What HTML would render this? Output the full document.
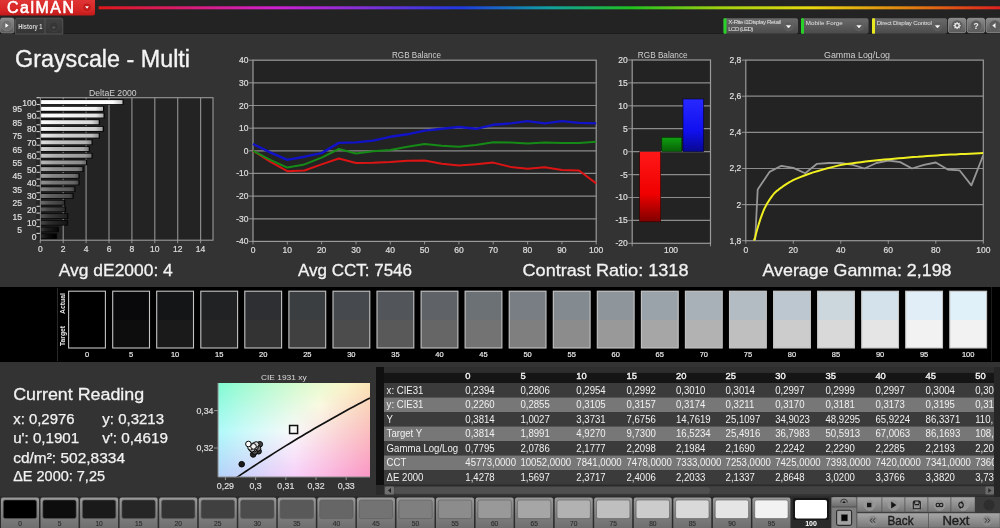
<!DOCTYPE html>
<html><head><meta charset="utf-8"><title>CalMAN Grayscale - Multi</title>
<style>
html,body{margin:0;padding:0;background:#333;width:1000px;height:528px;overflow:hidden;}
svg{display:block;font-family:"Liberation Sans", sans-serif;will-change:transform;}
</style></head><body>
<svg width="1000" height="528" viewBox="0 0 1000 528">
<defs>
<linearGradient id="rainbow" x1="0" x2="1" y1="0" y2="0">
 <stop offset="0" stop-color="#e01818"/>
 <stop offset="0.195" stop-color="#d020d0"/>
 <stop offset="0.297" stop-color="#8030d8"/>
 <stop offset="0.40" stop-color="#2038e0"/>
 <stop offset="0.50" stop-color="#10a0a0"/>
 <stop offset="0.59" stop-color="#20c020"/>
 <stop offset="0.69" stop-color="#a0d010"/>
 <stop offset="0.79" stop-color="#e8d810"/>
 <stop offset="0.90" stop-color="#e08010"/>
 <stop offset="1" stop-color="#e02020"/>
</linearGradient>
<linearGradient id="redbtn" x1="0" x2="0" y1="0" y2="1">
 <stop offset="0" stop-color="#e03434"/>
 <stop offset="0.6" stop-color="#d82626"/>
 <stop offset="1" stop-color="#c21a1a"/>
</linearGradient>
<linearGradient id="graybtn" x1="0" x2="0" y1="0" y2="1">
 <stop offset="0" stop-color="#8c8c8c"/>
 <stop offset="1" stop-color="#5a5a5a"/>
</linearGradient>
<linearGradient id="ddbtn" x1="0" x2="0" y1="0" y2="1">
 <stop offset="0" stop-color="#6a6a6a"/>
 <stop offset="1" stop-color="#4a4a4a"/>
</linearGradient>
<linearGradient id="swbtn" x1="0" x2="0" y1="0" y2="1">
 <stop offset="0" stop-color="#9a9a9a"/>
 <stop offset="1" stop-color="#6e6e6e"/>
</linearGradient>
<linearGradient id="ctlbtn" x1="0" x2="0" y1="0" y2="1">
 <stop offset="0" stop-color="#a8a8a8"/>
 <stop offset="1" stop-color="#767676"/>
</linearGradient>
<linearGradient id="hdr" x1="0" x2="0" y1="0" y2="1">
 <stop offset="0" stop-color="#2e2e2e"/>
 <stop offset="0.34" stop-color="#2e2e2e"/>
 <stop offset="0.37" stop-color="#161616"/>
 <stop offset="1" stop-color="#141414"/>
</linearGradient>
<linearGradient id="barR" x1="0" x2="1" y1="0" y2="0">
 <stop offset="0" stop-color="#b00000"/><stop offset="0.3" stop-color="#ff1010"/><stop offset="1" stop-color="#d00000"/>
</linearGradient>
<linearGradient id="barRv" x1="0" x2="0" y1="0" y2="1">
 <stop offset="0" stop-color="#ff1818"/><stop offset="0.6" stop-color="#f00000"/><stop offset="1" stop-color="#800000"/>
</linearGradient>
<linearGradient id="barGv" x1="0" x2="0" y1="0" y2="1">
 <stop offset="0" stop-color="#10a010"/><stop offset="1" stop-color="#086008"/>
</linearGradient>
<linearGradient id="barBv" x1="0" x2="0" y1="0" y2="1">
 <stop offset="0" stop-color="#2828ff"/><stop offset="0.6" stop-color="#1010f0"/><stop offset="1" stop-color="#080890"/>
</linearGradient>
<linearGradient id="cieH" x1="0" x2="1" y1="0" y2="0">
 <stop offset="0" stop-color="#a0f8d8"/>
 <stop offset="0.5" stop-color="#f4fff0"/>
 <stop offset="1" stop-color="#ffd8b0"/>
</linearGradient>
<linearGradient id="cieV" x1="0" x2="0" y1="0" y2="1">
 <stop offset="0" stop-color="#80ff80" stop-opacity="0.25"/>
 <stop offset="0.5" stop-color="#ffffff" stop-opacity="0.0"/>
 <stop offset="1" stop-color="#c080ff" stop-opacity="0.45"/>
</linearGradient>
</defs>

<rect x="0" y="0" width="1000" height="34" fill="#232323"/>
<rect x="0" y="33" width="1000" height="1" fill="#1c1c1c"/>
<rect x="0" y="34" width="1000" height="253" fill="#333333"/>
<rect x="0" y="287" width="1000" height="75" fill="#000000"/>
<rect x="0" y="362" width="1000" height="135" fill="#333333"/>
<rect x="0" y="496" width="1000" height="32" fill="#2c2c2c"/>
<path d="M0 0 H95 V13 Q95 15.5 92.5 15.5 H0 Z" fill="url(#redbtn)"/>
<text x="7.0" y="13.3" font-size="15.9" fill="#fff" text-anchor="start" font-weight="normal" textLength="67" lengthAdjust="spacing" stroke="#fff" stroke-width="0.6">CalMAN</text>
<circle cx="87" cy="7.5" r="4.5" fill="#c41a1a" stroke="#e04040" stroke-width="0.6"/>
<path d="M85 6.3 L89 6.3 L87 8.8 Z" fill="#fff"/>
<rect x="98.6" y="6.3" width="901.4" height="3" fill="url(#rainbow)"/>
<rect x="0.5" y="18" width="13.5" height="15" rx="2" fill="url(#graybtn)" stroke="#999" stroke-width="0.6"/>
<circle cx="6.8" cy="25.5" r="5.2" fill="#6e6e6e" stroke="#8a8a8a" stroke-width="0.6"/>
<path d="M5.4 23.3 L8.6 25.5 L5.4 27.7 Z" fill="#fff"/>
<linearGradient id="tabg" x1="0" x2="0" y1="0" y2="1"><stop offset="0" stop-color="#424242"/><stop offset="1" stop-color="#343434"/></linearGradient>
<path d="M15.4 34 V20 Q15.4 18.2 17.4 18.2 H60.8 Q62.8 18.2 62.8 20 V34 Z" fill="url(#tabg)" stroke="#5a5a5a" stroke-width="0.8"/>
<line x1="45" y1="18.5" x2="45" y2="34" stroke="#5a5a5a" stroke-width="0.8"/>
<text x="18.2" y="29.4" font-size="7.4" fill="#d4d4d4" text-anchor="start" font-weight="bold" textLength="24.3" lengthAdjust="spacingAndGlyphs" >History 1</text>
<circle cx="53.8" cy="26.8" r="4.8" fill="#363636" stroke="#484848" stroke-width="0.6"/>
<path d="M52.2 27.6 H55.4 M53.8 26 V29.2" stroke="#5e5e5e" stroke-width="0.8"/>
<rect x="723.5" y="18.2" width="74.5" height="15.6" rx="1.8" fill="url(#ddbtn)"/>
<rect x="723.5" y="18.2" width="3" height="15.6" rx="0.8" fill="#28d028"/>
<text x="728.3" y="24.4" font-size="6.2" fill="#e4e4e4" text-anchor="start" font-weight="normal" textLength="52.5" lengthAdjust="spacing" >X-Rite i1Display Retail</text>
<text x="728.3" y="30.799999999999997" font-size="6.2" fill="#e4e4e4" text-anchor="start" font-weight="normal" textLength="25" lengthAdjust="spacing" >LCD (LED)</text>
<circle cx="788.5" cy="26.3" r="4.4" fill="#5a5a5a" stroke="#6a6a6a" stroke-width="0.5"/>
<path d="M786.2 25.4 L790.8 25.4 L788.5 28 Z" fill="#fff" stroke="#fff" stroke-width="0.4" stroke-linejoin="round"/>
<rect x="801" y="18.2" width="67.5" height="15.6" rx="1.8" fill="url(#ddbtn)"/>
<rect x="801" y="18.2" width="3" height="15.6" rx="0.8" fill="#28d028"/>
<text x="805.8" y="24.6" font-size="6.2" fill="#e4e4e4" text-anchor="start" font-weight="normal" textLength="37" lengthAdjust="spacing" >Mobile Forge</text>
<circle cx="859.0" cy="26.3" r="4.4" fill="#5a5a5a" stroke="#6a6a6a" stroke-width="0.5"/>
<path d="M856.7 25.4 L861.3 25.4 L859.0 28 Z" fill="#fff" stroke="#fff" stroke-width="0.4" stroke-linejoin="round"/>
<rect x="872" y="18.2" width="75" height="15.6" rx="1.8" fill="url(#ddbtn)"/>
<rect x="872" y="18.2" width="3" height="15.6" rx="0.8" fill="#e8e820"/>
<text x="876.8" y="24.6" font-size="6.2" fill="#e4e4e4" text-anchor="start" font-weight="normal" textLength="55" lengthAdjust="spacing" >Direct Display Control</text>
<circle cx="937.5" cy="26.3" r="4.4" fill="#5a5a5a" stroke="#6a6a6a" stroke-width="0.5"/>
<path d="M935.2 25.4 L939.8 25.4 L937.5 28 Z" fill="#fff" stroke="#fff" stroke-width="0.4" stroke-linejoin="round"/>
<rect x="948.4" y="18.3" width="17.4" height="14.4" rx="2" fill="url(#graybtn)" stroke="#a0a0a0" stroke-width="0.7"/>
<circle cx="957.1" cy="25.6" r="5.4" fill="#5e5e5e"/>
<rect x="967.3" y="18.3" width="17.4" height="14.4" rx="2" fill="url(#graybtn)" stroke="#a0a0a0" stroke-width="0.7"/>
<circle cx="976.0" cy="25.6" r="5.4" fill="#5e5e5e"/>
<rect x="986.2" y="18.3" width="17.4" height="14.4" rx="2" fill="url(#graybtn)" stroke="#a0a0a0" stroke-width="0.7"/>
<circle cx="994.9" cy="25.6" r="5.4" fill="#5e5e5e"/>
<polygon points="960.78,25.24 960.78,25.96 959.68,26.38 959.48,26.87 959.96,27.95 959.45,28.46 958.37,27.98 957.88,28.18 957.46,29.28 956.74,29.28 956.32,28.18 955.83,27.98 954.75,28.46 954.24,27.95 954.72,26.87 954.52,26.38 953.42,25.96 953.42,25.24 954.52,24.82 954.72,24.33 954.24,23.25 954.75,22.74 955.83,23.22 956.32,23.02 956.74,21.92 957.46,21.92 957.88,23.02 958.37,23.22 959.45,22.74 959.96,23.25 959.48,24.33 959.68,24.82" fill="#e4e4e4"/>
<circle cx="957.1" cy="25.6" r="1.3" fill="#5e5e5e"/>
<text x="976" y="28.8" font-size="8.5" fill="#f0f0f0" text-anchor="middle" font-weight="bold" >?</text>
<path d="M995.5 23 L992.3 25.6 L995.5 28.2 Z" fill="#f4f4f4"/>
<text x="15" y="67" font-size="23.5" fill="#f4f4f4" text-anchor="start" font-weight="normal" textLength="175" lengthAdjust="spacingAndGlyphs" stroke="#f4f4f4" stroke-width="0.35">Grayscale - Multi</text>
<text x="112.8" y="95.6" font-size="8.8" fill="#d0d0d0" text-anchor="middle" font-weight="normal" textLength="47.6" lengthAdjust="spacingAndGlyphs" >DeltaE 2000</text>
<rect x="40.3" y="97.7" width="172.7" height="142.5" fill="#232323"/>
<line x1="63.2" y1="97.7" x2="63.2" y2="240.2" stroke="#8a8a8a" stroke-width="1.2"/>
<line x1="86.1" y1="97.7" x2="86.1" y2="240.2" stroke="#8a8a8a" stroke-width="1.2"/>
<line x1="109.0" y1="97.7" x2="109.0" y2="240.2" stroke="#8a8a8a" stroke-width="1.2"/>
<line x1="131.9" y1="97.7" x2="131.9" y2="240.2" stroke="#8a8a8a" stroke-width="1.2"/>
<line x1="154.8" y1="97.7" x2="154.8" y2="240.2" stroke="#8a8a8a" stroke-width="1.2"/>
<line x1="177.7" y1="97.7" x2="177.7" y2="240.2" stroke="#8a8a8a" stroke-width="1.2"/>
<line x1="200.6" y1="97.7" x2="200.6" y2="240.2" stroke="#8a8a8a" stroke-width="1.2"/>
<rect x="40.3" y="97.7" width="172.7" height="142.5" fill="none" stroke="#9a9a9a" stroke-width="1.1"/>
<rect x="36" y="98.2" width="3.8" height="142.0" fill="#262626"/>
<linearGradient id="db100" x1="0" x2="1" y1="0" y2="0"><stop offset="0" stop-color="rgb(255,255,255)"/><stop offset="0.3" stop-color="rgb(255,255,255)"/><stop offset="0.88" stop-color="rgb(255,255,255)"/><stop offset="1" stop-color="rgb(191,191,191)"/></linearGradient>
<rect x="40.9" y="99.30" width="82.8" height="5.6" fill="#060606"/>
<rect x="41.1" y="100.10" width="81.4" height="4.0" fill="url(#db100)"/>
<line x1="36.5" y1="97.7" x2="39.8" y2="97.7" stroke="#d4d4d4" stroke-width="1.1"/>
<text x="36.5" y="105.6" font-size="8.5" fill="#dedede" text-anchor="end" font-weight="normal" stroke="#dedede" stroke-width="0.22">100</text>
<linearGradient id="db95" x1="0" x2="1" y1="0" y2="0"><stop offset="0" stop-color="rgb(255,255,255)"/><stop offset="0.3" stop-color="rgb(255,255,255)"/><stop offset="0.88" stop-color="rgb(242,242,242)"/><stop offset="1" stop-color="rgb(181,181,181)"/></linearGradient>
<rect x="40.9" y="106.00" width="63.3" height="5.6" fill="#060606"/>
<rect x="41.1" y="106.80" width="61.9" height="4.0" fill="url(#db95)"/>
<line x1="36.5" y1="104.5" x2="39.8" y2="104.5" stroke="#d4d4d4" stroke-width="1.1"/>
<text x="22" y="112.30499999999999" font-size="8.5" fill="#dedede" text-anchor="end" font-weight="normal" stroke="#dedede" stroke-width="0.22">95</text>
<linearGradient id="db90" x1="0" x2="1" y1="0" y2="0"><stop offset="0" stop-color="rgb(255,255,255)"/><stop offset="0.3" stop-color="rgb(249,249,249)"/><stop offset="0.88" stop-color="rgb(229,229,229)"/><stop offset="1" stop-color="rgb(171,171,171)"/></linearGradient>
<rect x="40.9" y="112.71" width="63.8" height="5.6" fill="#060606"/>
<rect x="41.1" y="113.51" width="62.4" height="4.0" fill="url(#db90)"/>
<line x1="36.5" y1="111.3" x2="39.8" y2="111.3" stroke="#d4d4d4" stroke-width="1.1"/>
<text x="36.5" y="119.00999999999999" font-size="8.5" fill="#dedede" text-anchor="end" font-weight="normal" stroke="#dedede" stroke-width="0.22">90</text>
<linearGradient id="db85" x1="0" x2="1" y1="0" y2="0"><stop offset="0" stop-color="rgb(255,255,255)"/><stop offset="0.3" stop-color="rgb(237,237,237)"/><stop offset="0.88" stop-color="rgb(217,217,217)"/><stop offset="1" stop-color="rgb(162,162,162)"/></linearGradient>
<rect x="40.9" y="119.42" width="59.0" height="5.6" fill="#060606"/>
<rect x="41.1" y="120.22" width="57.6" height="4.0" fill="url(#db85)"/>
<line x1="36.5" y1="118.1" x2="39.8" y2="118.1" stroke="#d4d4d4" stroke-width="1.1"/>
<text x="22" y="125.715" font-size="8.5" fill="#dedede" text-anchor="end" font-weight="normal" stroke="#dedede" stroke-width="0.22">85</text>
<linearGradient id="db80" x1="0" x2="1" y1="0" y2="0"><stop offset="0" stop-color="rgb(249,249,249)"/><stop offset="0.3" stop-color="rgb(224,224,224)"/><stop offset="0.88" stop-color="rgb(204,204,204)"/><stop offset="1" stop-color="rgb(153,153,153)"/></linearGradient>
<rect x="40.9" y="126.12" width="63.0" height="5.6" fill="#060606"/>
<rect x="41.1" y="126.92" width="61.6" height="4.0" fill="url(#db80)"/>
<line x1="36.5" y1="124.8" x2="39.8" y2="124.8" stroke="#d4d4d4" stroke-width="1.1"/>
<text x="36.5" y="132.42" font-size="8.5" fill="#dedede" text-anchor="end" font-weight="normal" stroke="#dedede" stroke-width="0.22">80</text>
<linearGradient id="db75" x1="0" x2="1" y1="0" y2="0"><stop offset="0" stop-color="rgb(236,236,236)"/><stop offset="0.3" stop-color="rgb(211,211,211)"/><stop offset="0.88" stop-color="rgb(191,191,191)"/><stop offset="1" stop-color="rgb(143,143,143)"/></linearGradient>
<rect x="40.9" y="132.82" width="59.0" height="5.6" fill="#060606"/>
<rect x="41.1" y="133.62" width="57.6" height="4.0" fill="url(#db75)"/>
<line x1="36.5" y1="131.6" x2="39.8" y2="131.6" stroke="#d4d4d4" stroke-width="1.1"/>
<text x="22" y="139.125" font-size="8.5" fill="#dedede" text-anchor="end" font-weight="normal" stroke="#dedede" stroke-width="0.22">75</text>
<linearGradient id="db70" x1="0" x2="1" y1="0" y2="0"><stop offset="0" stop-color="rgb(223,223,223)"/><stop offset="0.3" stop-color="rgb(198,198,198)"/><stop offset="0.88" stop-color="rgb(178,178,178)"/><stop offset="1" stop-color="rgb(133,133,133)"/></linearGradient>
<rect x="40.9" y="139.53" width="51.8" height="5.6" fill="#060606"/>
<rect x="41.1" y="140.33" width="50.4" height="4.0" fill="url(#db70)"/>
<line x1="36.5" y1="138.4" x2="39.8" y2="138.4" stroke="#d4d4d4" stroke-width="1.1"/>
<text x="36.5" y="145.82999999999998" font-size="8.5" fill="#dedede" text-anchor="end" font-weight="normal" stroke="#dedede" stroke-width="0.22">70</text>
<linearGradient id="db65" x1="0" x2="1" y1="0" y2="0"><stop offset="0" stop-color="rgb(211,211,211)"/><stop offset="0.3" stop-color="rgb(186,186,186)"/><stop offset="0.88" stop-color="rgb(166,166,166)"/><stop offset="1" stop-color="rgb(124,124,124)"/></linearGradient>
<rect x="40.9" y="146.23" width="49.0" height="5.6" fill="#060606"/>
<rect x="41.1" y="147.03" width="47.6" height="4.0" fill="url(#db65)"/>
<line x1="36.5" y1="145.2" x2="39.8" y2="145.2" stroke="#d4d4d4" stroke-width="1.1"/>
<text x="22" y="152.535" font-size="8.5" fill="#dedede" text-anchor="end" font-weight="normal" stroke="#dedede" stroke-width="0.22">65</text>
<linearGradient id="db60" x1="0" x2="1" y1="0" y2="0"><stop offset="0" stop-color="rgb(198,198,198)"/><stop offset="0.3" stop-color="rgb(173,173,173)"/><stop offset="0.88" stop-color="rgb(153,153,153)"/><stop offset="1" stop-color="rgb(114,114,114)"/></linearGradient>
<rect x="40.9" y="152.94" width="51.8" height="5.6" fill="#060606"/>
<rect x="41.1" y="153.74" width="50.4" height="4.0" fill="url(#db60)"/>
<line x1="36.5" y1="152.0" x2="39.8" y2="152.0" stroke="#d4d4d4" stroke-width="1.1"/>
<text x="36.5" y="159.24" font-size="8.5" fill="#dedede" text-anchor="end" font-weight="normal" stroke="#dedede" stroke-width="0.22">60</text>
<linearGradient id="db55" x1="0" x2="1" y1="0" y2="0"><stop offset="0" stop-color="rgb(185,185,185)"/><stop offset="0.3" stop-color="rgb(160,160,160)"/><stop offset="0.88" stop-color="rgb(140,140,140)"/><stop offset="1" stop-color="rgb(105,105,105)"/></linearGradient>
<rect x="40.9" y="159.64" width="46.3" height="5.6" fill="#060606"/>
<rect x="41.1" y="160.44" width="44.9" height="4.0" fill="url(#db55)"/>
<line x1="36.5" y1="158.8" x2="39.8" y2="158.8" stroke="#d4d4d4" stroke-width="1.1"/>
<text x="22" y="165.945" font-size="8.5" fill="#dedede" text-anchor="end" font-weight="normal" stroke="#dedede" stroke-width="0.22">55</text>
<linearGradient id="db50" x1="0" x2="1" y1="0" y2="0"><stop offset="0" stop-color="rgb(172,172,172)"/><stop offset="0.3" stop-color="rgb(147,147,147)"/><stop offset="0.88" stop-color="rgb(127,127,127)"/><stop offset="1" stop-color="rgb(95,95,95)"/></linearGradient>
<rect x="40.9" y="166.35" width="42.7" height="5.6" fill="#060606"/>
<rect x="41.1" y="167.15" width="41.3" height="4.0" fill="url(#db50)"/>
<line x1="36.5" y1="165.6" x2="39.8" y2="165.6" stroke="#d4d4d4" stroke-width="1.1"/>
<text x="36.5" y="172.64999999999998" font-size="8.5" fill="#dedede" text-anchor="end" font-weight="normal" stroke="#dedede" stroke-width="0.22">50</text>
<linearGradient id="db45" x1="0" x2="1" y1="0" y2="0"><stop offset="0" stop-color="rgb(160,160,160)"/><stop offset="0.3" stop-color="rgb(135,135,135)"/><stop offset="0.88" stop-color="rgb(115,115,115)"/><stop offset="1" stop-color="rgb(86,86,86)"/></linearGradient>
<rect x="40.9" y="173.05" width="38.7" height="5.6" fill="#060606"/>
<rect x="41.1" y="173.85" width="37.3" height="4.0" fill="url(#db45)"/>
<line x1="36.5" y1="172.3" x2="39.8" y2="172.3" stroke="#d4d4d4" stroke-width="1.1"/>
<text x="22" y="179.355" font-size="8.5" fill="#dedede" text-anchor="end" font-weight="normal" stroke="#dedede" stroke-width="0.22">45</text>
<linearGradient id="db40" x1="0" x2="1" y1="0" y2="0"><stop offset="0" stop-color="rgb(147,147,147)"/><stop offset="0.3" stop-color="rgb(122,122,122)"/><stop offset="0.88" stop-color="rgb(102,102,102)"/><stop offset="1" stop-color="rgb(76,76,76)"/></linearGradient>
<rect x="40.9" y="179.76" width="38.7" height="5.6" fill="#060606"/>
<rect x="41.1" y="180.56" width="37.3" height="4.0" fill="url(#db40)"/>
<line x1="36.5" y1="179.1" x2="39.8" y2="179.1" stroke="#d4d4d4" stroke-width="1.1"/>
<text x="36.5" y="186.06" font-size="8.5" fill="#dedede" text-anchor="end" font-weight="normal" stroke="#dedede" stroke-width="0.22">40</text>
<linearGradient id="db35" x1="0" x2="1" y1="0" y2="0"><stop offset="0" stop-color="rgb(134,134,134)"/><stop offset="0.3" stop-color="rgb(109,109,109)"/><stop offset="0.88" stop-color="rgb(89,89,89)"/><stop offset="1" stop-color="rgb(66,66,66)"/></linearGradient>
<rect x="40.9" y="186.46" width="34.6" height="5.6" fill="#060606"/>
<rect x="41.1" y="187.26" width="33.2" height="4.0" fill="url(#db35)"/>
<line x1="36.5" y1="185.9" x2="39.8" y2="185.9" stroke="#d4d4d4" stroke-width="1.1"/>
<text x="22" y="192.765" font-size="8.5" fill="#dedede" text-anchor="end" font-weight="normal" stroke="#dedede" stroke-width="0.22">35</text>
<linearGradient id="db30" x1="0" x2="1" y1="0" y2="0"><stop offset="0" stop-color="rgb(121,121,121)"/><stop offset="0.3" stop-color="rgb(96,96,96)"/><stop offset="0.88" stop-color="rgb(76,76,76)"/><stop offset="1" stop-color="rgb(57,57,57)"/></linearGradient>
<rect x="40.9" y="193.17" width="32.8" height="5.6" fill="#060606"/>
<rect x="41.1" y="193.97" width="31.4" height="4.0" fill="url(#db30)"/>
<line x1="36.5" y1="192.7" x2="39.8" y2="192.7" stroke="#d4d4d4" stroke-width="1.1"/>
<text x="36.5" y="199.47" font-size="8.5" fill="#dedede" text-anchor="end" font-weight="normal" stroke="#dedede" stroke-width="0.22">30</text>
<linearGradient id="db25" x1="0" x2="1" y1="0" y2="0"><stop offset="0" stop-color="rgb(109,109,109)"/><stop offset="0.3" stop-color="rgb(84,84,84)"/><stop offset="0.88" stop-color="rgb(64,64,64)"/><stop offset="1" stop-color="rgb(48,48,48)"/></linearGradient>
<rect x="40.9" y="199.88" width="24.4" height="5.6" fill="#060606"/>
<rect x="41.1" y="200.68" width="23.0" height="4.0" fill="url(#db25)"/>
<line x1="36.5" y1="199.5" x2="39.8" y2="199.5" stroke="#d4d4d4" stroke-width="1.1"/>
<text x="22" y="206.175" font-size="8.5" fill="#dedede" text-anchor="end" font-weight="normal" stroke="#dedede" stroke-width="0.22">25</text>
<linearGradient id="db20" x1="0" x2="1" y1="0" y2="0"><stop offset="0" stop-color="rgb(96,96,96)"/><stop offset="0.3" stop-color="rgb(71,71,71)"/><stop offset="0.88" stop-color="rgb(51,51,51)"/><stop offset="1" stop-color="rgb(38,38,38)"/></linearGradient>
<rect x="40.9" y="206.58" width="25.2" height="5.6" fill="#060606"/>
<rect x="41.1" y="207.38" width="23.8" height="4.0" fill="url(#db20)"/>
<line x1="36.5" y1="206.3" x2="39.8" y2="206.3" stroke="#d4d4d4" stroke-width="1.1"/>
<text x="36.5" y="212.88" font-size="8.5" fill="#dedede" text-anchor="end" font-weight="normal" stroke="#dedede" stroke-width="0.22">20</text>
<linearGradient id="db15" x1="0" x2="1" y1="0" y2="0"><stop offset="0" stop-color="rgb(83,83,83)"/><stop offset="0.3" stop-color="rgb(58,58,58)"/><stop offset="0.88" stop-color="rgb(38,38,38)"/><stop offset="1" stop-color="rgb(28,28,28)"/></linearGradient>
<rect x="40.9" y="213.28" width="27.5" height="5.6" fill="#060606"/>
<rect x="41.1" y="214.08" width="26.1" height="4.0" fill="url(#db15)"/>
<line x1="36.5" y1="213.1" x2="39.8" y2="213.1" stroke="#d4d4d4" stroke-width="1.1"/>
<text x="22" y="219.58499999999998" font-size="8.5" fill="#dedede" text-anchor="end" font-weight="normal" stroke="#dedede" stroke-width="0.22">15</text>
<linearGradient id="db10" x1="0" x2="1" y1="0" y2="0"><stop offset="0" stop-color="rgb(71,71,71)"/><stop offset="0.3" stop-color="rgb(46,46,46)"/><stop offset="0.88" stop-color="rgb(26,26,26)"/><stop offset="1" stop-color="rgb(19,19,19)"/></linearGradient>
<rect x="40.9" y="219.99" width="27.2" height="5.6" fill="#060606"/>
<rect x="41.1" y="220.79" width="25.8" height="4.0" fill="url(#db10)"/>
<line x1="36.5" y1="219.8" x2="39.8" y2="219.8" stroke="#d4d4d4" stroke-width="1.1"/>
<text x="36.5" y="226.29" font-size="8.5" fill="#dedede" text-anchor="end" font-weight="normal" stroke="#dedede" stroke-width="0.22">10</text>
<linearGradient id="db5" x1="0" x2="1" y1="0" y2="0"><stop offset="0" stop-color="rgb(58,58,58)"/><stop offset="0.3" stop-color="rgb(33,33,33)"/><stop offset="0.88" stop-color="rgb(13,13,13)"/><stop offset="1" stop-color="rgb(9,9,9)"/></linearGradient>
<rect x="40.9" y="226.69" width="18.0" height="5.6" fill="#060606"/>
<rect x="41.1" y="227.50" width="16.6" height="4.0" fill="url(#db5)"/>
<line x1="36.5" y1="226.6" x2="39.8" y2="226.6" stroke="#d4d4d4" stroke-width="1.1"/>
<text x="22" y="232.995" font-size="8.5" fill="#dedede" text-anchor="end" font-weight="normal" stroke="#dedede" stroke-width="0.22">5</text>
<linearGradient id="db0" x1="0" x2="1" y1="0" y2="0"><stop offset="0" stop-color="rgb(45,45,45)"/><stop offset="0.3" stop-color="rgb(20,20,20)"/><stop offset="0.88" stop-color="rgb(0,0,0)"/><stop offset="1" stop-color="rgb(0,0,0)"/></linearGradient>
<rect x="40.9" y="233.40" width="16.3" height="5.6" fill="#060606"/>
<rect x="41.1" y="234.20" width="14.9" height="4.0" fill="url(#db0)"/>
<line x1="36.5" y1="233.4" x2="39.8" y2="233.4" stroke="#d4d4d4" stroke-width="1.1"/>
<text x="36.5" y="239.7" font-size="8.5" fill="#dedede" text-anchor="end" font-weight="normal" stroke="#dedede" stroke-width="0.22">0</text>
<line x1="40.3" y1="240.2" x2="40.3" y2="243.2" stroke="#aaa" stroke-width="0.8"/>
<text x="40.3" y="252" font-size="8.5" fill="#dedede" text-anchor="middle" font-weight="normal" stroke="#dedede" stroke-width="0.22">0</text>
<line x1="63.2" y1="240.2" x2="63.2" y2="243.2" stroke="#aaa" stroke-width="0.8"/>
<text x="63.199999999999996" y="252" font-size="8.5" fill="#dedede" text-anchor="middle" font-weight="normal" stroke="#dedede" stroke-width="0.22">2</text>
<line x1="86.1" y1="240.2" x2="86.1" y2="243.2" stroke="#aaa" stroke-width="0.8"/>
<text x="86.1" y="252" font-size="8.5" fill="#dedede" text-anchor="middle" font-weight="normal" stroke="#dedede" stroke-width="0.22">4</text>
<line x1="109.0" y1="240.2" x2="109.0" y2="243.2" stroke="#aaa" stroke-width="0.8"/>
<text x="108.99999999999999" y="252" font-size="8.5" fill="#dedede" text-anchor="middle" font-weight="normal" stroke="#dedede" stroke-width="0.22">6</text>
<line x1="131.9" y1="240.2" x2="131.9" y2="243.2" stroke="#aaa" stroke-width="0.8"/>
<text x="131.89999999999998" y="252" font-size="8.5" fill="#dedede" text-anchor="middle" font-weight="normal" stroke="#dedede" stroke-width="0.22">8</text>
<line x1="154.8" y1="240.2" x2="154.8" y2="243.2" stroke="#aaa" stroke-width="0.8"/>
<text x="154.8" y="252" font-size="8.5" fill="#dedede" text-anchor="middle" font-weight="normal" stroke="#dedede" stroke-width="0.22">10</text>
<line x1="177.7" y1="240.2" x2="177.7" y2="243.2" stroke="#aaa" stroke-width="0.8"/>
<text x="177.7" y="252" font-size="8.5" fill="#dedede" text-anchor="middle" font-weight="normal" stroke="#dedede" stroke-width="0.22">12</text>
<line x1="200.6" y1="240.2" x2="200.6" y2="243.2" stroke="#aaa" stroke-width="0.8"/>
<text x="200.59999999999997" y="252" font-size="8.5" fill="#dedede" text-anchor="middle" font-weight="normal" stroke="#dedede" stroke-width="0.22">14</text>
<text x="416.5" y="57.6" font-size="8.7" fill="#d0d0d0" text-anchor="middle" font-weight="normal" textLength="49" lengthAdjust="spacingAndGlyphs" >RGB Balance</text>
<rect x="253" y="60.2" width="343.20000000000005" height="181.2" fill="#232323"/>
<line x1="253" y1="82.8" x2="596.2" y2="82.8" stroke="#8c8c8c" stroke-width="1.2"/>
<line x1="253" y1="105.5" x2="596.2" y2="105.5" stroke="#8c8c8c" stroke-width="1.2"/>
<line x1="253" y1="128.2" x2="596.2" y2="128.2" stroke="#8c8c8c" stroke-width="1.2"/>
<line x1="253" y1="150.8" x2="596.2" y2="150.8" stroke="#8c8c8c" stroke-width="1.2"/>
<line x1="253" y1="173.4" x2="596.2" y2="173.4" stroke="#8c8c8c" stroke-width="1.2"/>
<line x1="253" y1="196.1" x2="596.2" y2="196.1" stroke="#8c8c8c" stroke-width="1.2"/>
<line x1="253" y1="218.8" x2="596.2" y2="218.8" stroke="#8c8c8c" stroke-width="1.2"/>
<rect x="253" y="60.2" width="343.20000000000005" height="181.2" fill="none" stroke="#9a9a9a" stroke-width="1.2"/>
<line x1="249" y1="60.2" x2="253" y2="60.2" stroke="#aaa" stroke-width="0.8"/>
<text x="248.5" y="63.2" font-size="8.5" fill="#dedede" text-anchor="end" font-weight="normal" stroke="#dedede" stroke-width="0.22">40</text>
<line x1="249" y1="82.8" x2="253" y2="82.8" stroke="#aaa" stroke-width="0.8"/>
<text x="248.5" y="85.85" font-size="8.5" fill="#dedede" text-anchor="end" font-weight="normal" stroke="#dedede" stroke-width="0.22">30</text>
<line x1="249" y1="105.5" x2="253" y2="105.5" stroke="#aaa" stroke-width="0.8"/>
<text x="248.5" y="108.5" font-size="8.5" fill="#dedede" text-anchor="end" font-weight="normal" stroke="#dedede" stroke-width="0.22">20</text>
<line x1="249" y1="128.2" x2="253" y2="128.2" stroke="#aaa" stroke-width="0.8"/>
<text x="248.5" y="131.15" font-size="8.5" fill="#dedede" text-anchor="end" font-weight="normal" stroke="#dedede" stroke-width="0.22">10</text>
<line x1="249" y1="150.8" x2="253" y2="150.8" stroke="#aaa" stroke-width="0.8"/>
<text x="248.5" y="153.8" font-size="8.5" fill="#dedede" text-anchor="end" font-weight="normal" stroke="#dedede" stroke-width="0.22">0</text>
<line x1="249" y1="173.4" x2="253" y2="173.4" stroke="#aaa" stroke-width="0.8"/>
<text x="248.5" y="176.45" font-size="8.5" fill="#dedede" text-anchor="end" font-weight="normal" stroke="#dedede" stroke-width="0.22">-10</text>
<line x1="249" y1="196.1" x2="253" y2="196.1" stroke="#aaa" stroke-width="0.8"/>
<text x="248.5" y="199.10000000000002" font-size="8.5" fill="#dedede" text-anchor="end" font-weight="normal" stroke="#dedede" stroke-width="0.22">-20</text>
<line x1="249" y1="218.8" x2="253" y2="218.8" stroke="#aaa" stroke-width="0.8"/>
<text x="248.5" y="221.75" font-size="8.5" fill="#dedede" text-anchor="end" font-weight="normal" stroke="#dedede" stroke-width="0.22">-30</text>
<line x1="249" y1="241.4" x2="253" y2="241.4" stroke="#aaa" stroke-width="0.8"/>
<text x="248.5" y="244.39999999999998" font-size="8.5" fill="#dedede" text-anchor="end" font-weight="normal" stroke="#dedede" stroke-width="0.22">-40</text>
<line x1="253.0" y1="241.4" x2="253.0" y2="244.4" stroke="#aaa" stroke-width="0.8"/>
<text x="253.0" y="253" font-size="8.5" fill="#dedede" text-anchor="middle" font-weight="normal" stroke="#dedede" stroke-width="0.22">0</text>
<line x1="287.3" y1="241.4" x2="287.3" y2="244.4" stroke="#aaa" stroke-width="0.8"/>
<text x="287.32" y="253" font-size="8.5" fill="#dedede" text-anchor="middle" font-weight="normal" stroke="#dedede" stroke-width="0.22">10</text>
<line x1="321.6" y1="241.4" x2="321.6" y2="244.4" stroke="#aaa" stroke-width="0.8"/>
<text x="321.64" y="253" font-size="8.5" fill="#dedede" text-anchor="middle" font-weight="normal" stroke="#dedede" stroke-width="0.22">20</text>
<line x1="356.0" y1="241.4" x2="356.0" y2="244.4" stroke="#aaa" stroke-width="0.8"/>
<text x="355.96000000000004" y="253" font-size="8.5" fill="#dedede" text-anchor="middle" font-weight="normal" stroke="#dedede" stroke-width="0.22">30</text>
<line x1="390.3" y1="241.4" x2="390.3" y2="244.4" stroke="#aaa" stroke-width="0.8"/>
<text x="390.28000000000003" y="253" font-size="8.5" fill="#dedede" text-anchor="middle" font-weight="normal" stroke="#dedede" stroke-width="0.22">40</text>
<line x1="424.6" y1="241.4" x2="424.6" y2="244.4" stroke="#aaa" stroke-width="0.8"/>
<text x="424.6" y="253" font-size="8.5" fill="#dedede" text-anchor="middle" font-weight="normal" stroke="#dedede" stroke-width="0.22">50</text>
<line x1="458.9" y1="241.4" x2="458.9" y2="244.4" stroke="#aaa" stroke-width="0.8"/>
<text x="458.9200000000001" y="253" font-size="8.5" fill="#dedede" text-anchor="middle" font-weight="normal" stroke="#dedede" stroke-width="0.22">60</text>
<line x1="493.2" y1="241.4" x2="493.2" y2="244.4" stroke="#aaa" stroke-width="0.8"/>
<text x="493.24" y="253" font-size="8.5" fill="#dedede" text-anchor="middle" font-weight="normal" stroke="#dedede" stroke-width="0.22">70</text>
<line x1="527.6" y1="241.4" x2="527.6" y2="244.4" stroke="#aaa" stroke-width="0.8"/>
<text x="527.5600000000001" y="253" font-size="8.5" fill="#dedede" text-anchor="middle" font-weight="normal" stroke="#dedede" stroke-width="0.22">80</text>
<line x1="561.9" y1="241.4" x2="561.9" y2="244.4" stroke="#aaa" stroke-width="0.8"/>
<text x="561.8800000000001" y="253" font-size="8.5" fill="#dedede" text-anchor="middle" font-weight="normal" stroke="#dedede" stroke-width="0.22">90</text>
<line x1="596.2" y1="241.4" x2="596.2" y2="244.4" stroke="#aaa" stroke-width="0.8"/>
<text x="596.2" y="253" font-size="8.5" fill="#dedede" text-anchor="middle" font-weight="normal" stroke="#dedede" stroke-width="0.22">100</text>
<polyline points="253.0,150.8 270.2,161.7 287.3,171.2 304.5,170.5 321.6,164.4 338.8,158.5 356.0,163.0 373.1,162.8 390.3,162.1 407.4,160.8 424.6,160.5 441.8,163.7 458.9,165.5 476.1,164.2 493.2,162.6 510.4,166.9 527.6,168.7 544.7,167.3 561.9,170.1 579.0,170.5 596.2,183.4" fill="none" stroke="#dc1414" stroke-width="2.0" stroke-linejoin="round"/>
<polyline points="253.0,150.8 270.2,159.9 287.3,167.6 304.5,164.4 321.6,157.6 338.8,149.0 356.0,153.5 373.1,151.3 390.3,150.0 407.4,146.8 424.6,144.0 441.8,145.8 458.9,146.7 476.1,144.9 493.2,142.2 510.4,142.6 527.6,143.6 544.7,142.6 561.9,143.1 579.0,142.9 596.2,141.7" fill="none" stroke="#168a16" stroke-width="2.0" stroke-linejoin="round"/>
<polyline points="253.0,144.0 270.2,152.4 287.3,159.9 304.5,156.7 321.6,153.1 338.8,142.9 356.0,142.4 373.1,140.6 390.3,136.8 407.4,134.3 424.6,130.6 441.8,128.8 458.9,127.0 476.1,128.8 493.2,124.8 510.4,123.4 527.6,121.1 544.7,123.4 561.9,121.1 579.0,122.9 596.2,123.4" fill="none" stroke="#1212c8" stroke-width="2.4" stroke-linejoin="round"/>
<text x="662.7" y="57.6" font-size="8.7" fill="#d0d0d0" text-anchor="middle" font-weight="normal" textLength="49.7" lengthAdjust="spacingAndGlyphs" >RGB Balance</text>
<rect x="632.2" y="60" width="78.29999999999995" height="183.3" fill="#232323"/>
<line x1="632.2" y1="82.9" x2="710.5" y2="82.9" stroke="#8c8c8c" stroke-width="1.2"/>
<line x1="632.2" y1="105.8" x2="710.5" y2="105.8" stroke="#8c8c8c" stroke-width="1.2"/>
<line x1="632.2" y1="128.7" x2="710.5" y2="128.7" stroke="#8c8c8c" stroke-width="1.2"/>
<line x1="632.2" y1="151.7" x2="710.5" y2="151.7" stroke="#8c8c8c" stroke-width="1.2"/>
<line x1="632.2" y1="174.6" x2="710.5" y2="174.6" stroke="#8c8c8c" stroke-width="1.2"/>
<line x1="632.2" y1="197.5" x2="710.5" y2="197.5" stroke="#8c8c8c" stroke-width="1.2"/>
<line x1="632.2" y1="220.4" x2="710.5" y2="220.4" stroke="#8c8c8c" stroke-width="1.2"/>
<rect x="632.2" y="60" width="78.29999999999995" height="183.3" fill="none" stroke="#9a9a9a" stroke-width="1.2"/>
<line x1="628.2" y1="60.0" x2="632.2" y2="60.0" stroke="#aaa" stroke-width="0.8"/>
<text x="627.7" y="63.0" font-size="8.5" fill="#dedede" text-anchor="end" font-weight="normal" stroke="#dedede" stroke-width="0.22">20</text>
<line x1="628.2" y1="82.9" x2="632.2" y2="82.9" stroke="#aaa" stroke-width="0.8"/>
<text x="627.7" y="85.9125" font-size="8.5" fill="#dedede" text-anchor="end" font-weight="normal" stroke="#dedede" stroke-width="0.22">15</text>
<line x1="628.2" y1="105.8" x2="632.2" y2="105.8" stroke="#aaa" stroke-width="0.8"/>
<text x="627.7" y="108.825" font-size="8.5" fill="#dedede" text-anchor="end" font-weight="normal" stroke="#dedede" stroke-width="0.22">10</text>
<line x1="628.2" y1="128.7" x2="632.2" y2="128.7" stroke="#aaa" stroke-width="0.8"/>
<text x="627.7" y="131.7375" font-size="8.5" fill="#dedede" text-anchor="end" font-weight="normal" stroke="#dedede" stroke-width="0.22">5</text>
<line x1="628.2" y1="151.7" x2="632.2" y2="151.7" stroke="#aaa" stroke-width="0.8"/>
<text x="627.7" y="154.65" font-size="8.5" fill="#dedede" text-anchor="end" font-weight="normal" stroke="#dedede" stroke-width="0.22">0</text>
<line x1="628.2" y1="174.6" x2="632.2" y2="174.6" stroke="#aaa" stroke-width="0.8"/>
<text x="627.7" y="177.5625" font-size="8.5" fill="#dedede" text-anchor="end" font-weight="normal" stroke="#dedede" stroke-width="0.22">-5</text>
<line x1="628.2" y1="197.5" x2="632.2" y2="197.5" stroke="#aaa" stroke-width="0.8"/>
<text x="627.7" y="200.475" font-size="8.5" fill="#dedede" text-anchor="end" font-weight="normal" stroke="#dedede" stroke-width="0.22">-10</text>
<line x1="628.2" y1="220.4" x2="632.2" y2="220.4" stroke="#aaa" stroke-width="0.8"/>
<text x="627.7" y="223.3875" font-size="8.5" fill="#dedede" text-anchor="end" font-weight="normal" stroke="#dedede" stroke-width="0.22">-15</text>
<line x1="628.2" y1="243.3" x2="632.2" y2="243.3" stroke="#aaa" stroke-width="0.8"/>
<text x="627.7" y="246.3" font-size="8.5" fill="#dedede" text-anchor="end" font-weight="normal" stroke="#dedede" stroke-width="0.22">-20</text>
<line x1="632.2" y1="243.3" x2="632.2" y2="246.3" stroke="#aaa" stroke-width="0.8"/>
<line x1="710.5" y1="243.3" x2="710.5" y2="246.3" stroke="#aaa" stroke-width="0.8"/>
<text x="671" y="253" font-size="8.5" fill="#dedede" text-anchor="middle" font-weight="normal" stroke="#dedede" stroke-width="0.22">100</text>
<rect x="639.7" y="151.7" width="21" height="70.1" fill="url(#barRv)" stroke="#300" stroke-width="0.6"/>
<rect x="661.8" y="137.4" width="20" height="14.2" fill="url(#barGv)" stroke="#030" stroke-width="0.6"/>
<rect x="683" y="99.0" width="20.5" height="52.7" fill="url(#barBv)" stroke="#003" stroke-width="0.6"/>
<text x="857" y="57.6" font-size="8.7" fill="#d0d0d0" text-anchor="middle" font-weight="normal" textLength="66" lengthAdjust="spacingAndGlyphs" >Gamma Log/Log</text>
<rect x="745.8" y="60.1" width="237.5" height="180.6" fill="#232323"/>
<line x1="745.8" y1="96.2" x2="983.3" y2="96.2" stroke="#8c8c8c" stroke-width="1.2"/>
<line x1="745.8" y1="132.3" x2="983.3" y2="132.3" stroke="#8c8c8c" stroke-width="1.2"/>
<line x1="745.8" y1="168.5" x2="983.3" y2="168.5" stroke="#8c8c8c" stroke-width="1.2"/>
<line x1="745.8" y1="204.6" x2="983.3" y2="204.6" stroke="#8c8c8c" stroke-width="1.2"/>
<rect x="745.8" y="60.1" width="237.5" height="180.6" fill="none" stroke="#9a9a9a" stroke-width="1.2"/>
<line x1="741.8" y1="60.1" x2="745.8" y2="60.1" stroke="#aaa" stroke-width="0.8"/>
<text x="741.3" y="63.1" font-size="8.5" fill="#dedede" text-anchor="end" font-weight="normal" stroke="#dedede" stroke-width="0.22">2,8</text>
<line x1="741.8" y1="96.2" x2="745.8" y2="96.2" stroke="#aaa" stroke-width="0.8"/>
<text x="741.3" y="99.21999999999994" font-size="8.5" fill="#dedede" text-anchor="end" font-weight="normal" stroke="#dedede" stroke-width="0.22">2,6</text>
<line x1="741.8" y1="132.3" x2="745.8" y2="132.3" stroke="#aaa" stroke-width="0.8"/>
<text x="741.3" y="135.33999999999997" font-size="8.5" fill="#dedede" text-anchor="end" font-weight="normal" stroke="#dedede" stroke-width="0.22">2,4</text>
<line x1="741.8" y1="168.5" x2="745.8" y2="168.5" stroke="#aaa" stroke-width="0.8"/>
<text x="741.3" y="171.45999999999992" font-size="8.5" fill="#dedede" text-anchor="end" font-weight="normal" stroke="#dedede" stroke-width="0.22">2,2</text>
<line x1="741.8" y1="204.6" x2="745.8" y2="204.6" stroke="#aaa" stroke-width="0.8"/>
<text x="741.3" y="207.57999999999996" font-size="8.5" fill="#dedede" text-anchor="end" font-weight="normal" stroke="#dedede" stroke-width="0.22">2</text>
<line x1="741.8" y1="240.7" x2="745.8" y2="240.7" stroke="#aaa" stroke-width="0.8"/>
<text x="741.3" y="243.69999999999996" font-size="8.5" fill="#dedede" text-anchor="end" font-weight="normal" stroke="#dedede" stroke-width="0.22">1,8</text>
<line x1="745.8" y1="240.7" x2="745.8" y2="243.7" stroke="#aaa" stroke-width="0.8"/>
<text x="745.8" y="253" font-size="8.5" fill="#dedede" text-anchor="middle" font-weight="normal" stroke="#dedede" stroke-width="0.22">0</text>
<line x1="793.3" y1="240.7" x2="793.3" y2="243.7" stroke="#aaa" stroke-width="0.8"/>
<text x="793.3" y="253" font-size="8.5" fill="#dedede" text-anchor="middle" font-weight="normal" stroke="#dedede" stroke-width="0.22">20</text>
<line x1="840.8" y1="240.7" x2="840.8" y2="243.7" stroke="#aaa" stroke-width="0.8"/>
<text x="840.8" y="253" font-size="8.5" fill="#dedede" text-anchor="middle" font-weight="normal" stroke="#dedede" stroke-width="0.22">40</text>
<line x1="888.3" y1="240.7" x2="888.3" y2="243.7" stroke="#aaa" stroke-width="0.8"/>
<text x="888.3" y="253" font-size="8.5" fill="#dedede" text-anchor="middle" font-weight="normal" stroke="#dedede" stroke-width="0.22">60</text>
<line x1="935.8" y1="240.7" x2="935.8" y2="243.7" stroke="#aaa" stroke-width="0.8"/>
<text x="935.8" y="253" font-size="8.5" fill="#dedede" text-anchor="middle" font-weight="normal" stroke="#dedede" stroke-width="0.22">80</text>
<line x1="983.3" y1="240.7" x2="983.3" y2="243.7" stroke="#aaa" stroke-width="0.8"/>
<text x="983.3" y="253" font-size="8.5" fill="#dedede" text-anchor="middle" font-weight="normal" stroke="#dedede" stroke-width="0.22">100</text>
<clipPath id="gclip"><rect x="745.8" y="60.1" width="237.5" height="180.6"/></clipPath>
<polyline clip-path="url(#gclip)" points="745.8,425.0 757.7,189.6 769.5,171.9 781.4,165.8 793.3,167.9 805.2,173.2 817.0,163.8 828.9,163.0 840.8,163.0 852.7,164.8 864.5,168.5 876.4,163.0 888.3,160.5 900.2,162.1 912.0,168.5 923.9,164.8 935.8,162.5 947.7,169.5 959.5,170.3 971.4,185.4 983.3,155.1" fill="none" stroke="#969696" stroke-width="1.8" stroke-linejoin="round"/>
<polyline clip-path="url(#gclip)" points="753.9,240.7 755.1,237.6 756.2,233.0 757.4,228.8 758.6,224.7 759.8,220.9 761.0,217.3 762.2,214.1 763.4,211.0 764.6,208.2 765.8,206.0 766.9,203.9 768.1,202.0 769.3,200.1 770.5,198.3 771.7,196.6 772.9,195.0 774.1,193.5 775.2,192.4 776.4,191.3 777.6,190.4 778.8,189.4 780.0,188.5 781.2,187.6 782.4,186.8 783.6,185.9 784.8,185.1 785.9,184.4 787.1,183.6 788.3,182.9 789.5,182.2 790.7,181.5 791.9,180.8 793.1,180.2 794.2,179.7 799.0,177.6 803.8,175.8 808.5,174.0 813.2,172.4 818.0,171.0 822.8,169.6 827.5,168.3 832.2,167.1 837.0,165.9 841.8,164.8 846.5,164.0 851.2,163.4 856.0,162.8 860.8,162.2 865.5,161.6 870.2,161.1 875.0,160.6 879.8,160.1 884.5,159.6 889.2,159.2 894.0,158.7 898.8,158.3 903.5,157.9 908.2,157.5 913.0,157.1 917.8,156.8 922.5,156.4 927.2,156.1 932.0,155.7 936.8,155.4 941.5,155.1 946.2,154.8 951.0,154.6 955.8,154.4 960.5,154.1 965.2,153.9 970.0,153.7 974.8,153.5 979.5,153.3 983.3,153.1" fill="none" stroke="#f0f020" stroke-width="2" stroke-linejoin="round"/>
<text x="58.8" y="276" font-size="17.2" fill="#f2f2f2" text-anchor="start" font-weight="normal" textLength="114" lengthAdjust="spacingAndGlyphs" stroke="#f2f2f2" stroke-width="0.3">Avg dE2000: 4</text>
<text x="298" y="276" font-size="17.2" fill="#f2f2f2" text-anchor="start" font-weight="normal" textLength="114" lengthAdjust="spacingAndGlyphs" stroke="#f2f2f2" stroke-width="0.3">Avg CCT: 7546</text>
<text x="522.5" y="276" font-size="17.2" fill="#f2f2f2" text-anchor="start" font-weight="normal" textLength="166" lengthAdjust="spacingAndGlyphs" stroke="#f2f2f2" stroke-width="0.3">Contrast Ratio: 1318</text>
<text x="762.5" y="276" font-size="17.2" fill="#f2f2f2" text-anchor="start" font-weight="normal" textLength="189" lengthAdjust="spacingAndGlyphs" stroke="#f2f2f2" stroke-width="0.3">Average Gamma: 2,198</text>
<line x1="57.5" y1="288" x2="57.5" y2="361" stroke="#333" stroke-width="0.8"/>
<line x1="991.5" y1="287" x2="991.5" y2="361" stroke="#1c1c1c" stroke-width="1"/>
<text transform="translate(64.5,314) rotate(-90)" font-size="7.5" fill="#e8e8e8" font-weight="bold" textLength="21" lengthAdjust="spacingAndGlyphs">Actual</text>
<text transform="translate(64.5,346) rotate(-90)" font-size="7.5" fill="#e8e8e8" font-weight="bold" textLength="20" lengthAdjust="spacingAndGlyphs">Target</text>
<rect x="68.6" y="291.2" width="36.8" height="56.8" fill="rgb(0,0,0)"/>
<rect x="68.6" y="291.2" width="36.8" height="28.8" fill="rgb(0,0,0)"/>
<rect x="68.6" y="291.2" width="36.8" height="56.8" fill="none" stroke="#c4c4c4" stroke-width="1.1"/>
<text x="87.0" y="357" font-size="7.5" fill="#e8e8e8" text-anchor="middle" font-weight="normal" stroke="#e8e8e8" stroke-width="0.2">0</text>
<rect x="112.7" y="291.2" width="36.8" height="56.8" fill="rgb(13,13,13)"/>
<rect x="112.7" y="291.2" width="36.8" height="28.8" fill="rgb(9,9,11)"/>
<rect x="112.7" y="291.2" width="36.8" height="56.8" fill="none" stroke="#c4c4c4" stroke-width="1.1"/>
<text x="131.06" y="357" font-size="7.5" fill="#e8e8e8" text-anchor="middle" font-weight="normal" stroke="#e8e8e8" stroke-width="0.2">5</text>
<rect x="156.7" y="291.2" width="36.8" height="56.8" fill="rgb(26,26,26)"/>
<rect x="156.7" y="291.2" width="36.8" height="28.8" fill="rgb(20,21,23)"/>
<rect x="156.7" y="291.2" width="36.8" height="56.8" fill="none" stroke="#c4c4c4" stroke-width="1.1"/>
<text x="175.12" y="357" font-size="7.5" fill="#e8e8e8" text-anchor="middle" font-weight="normal" stroke="#e8e8e8" stroke-width="0.2">10</text>
<rect x="200.8" y="291.2" width="36.8" height="56.8" fill="rgb(38,38,38)"/>
<rect x="200.8" y="291.2" width="36.8" height="28.8" fill="rgb(32,34,36)"/>
<rect x="200.8" y="291.2" width="36.8" height="56.8" fill="none" stroke="#c4c4c4" stroke-width="1.1"/>
<text x="219.18" y="357" font-size="7.5" fill="#e8e8e8" text-anchor="middle" font-weight="normal" stroke="#e8e8e8" stroke-width="0.2">15</text>
<rect x="244.8" y="291.2" width="36.8" height="56.8" fill="rgb(51,51,51)"/>
<rect x="244.8" y="291.2" width="36.8" height="28.8" fill="rgb(46,47,50)"/>
<rect x="244.8" y="291.2" width="36.8" height="56.8" fill="none" stroke="#c4c4c4" stroke-width="1.1"/>
<text x="263.24" y="357" font-size="7.5" fill="#e8e8e8" text-anchor="middle" font-weight="normal" stroke="#e8e8e8" stroke-width="0.2">20</text>
<rect x="288.9" y="291.2" width="36.8" height="56.8" fill="rgb(64,64,64)"/>
<rect x="288.9" y="291.2" width="36.8" height="28.8" fill="rgb(59,62,64)"/>
<rect x="288.9" y="291.2" width="36.8" height="56.8" fill="none" stroke="#c4c4c4" stroke-width="1.1"/>
<text x="307.29999999999995" y="357" font-size="7.5" fill="#e8e8e8" text-anchor="middle" font-weight="normal" stroke="#e8e8e8" stroke-width="0.2">25</text>
<rect x="333.0" y="291.2" width="36.8" height="56.8" fill="rgb(76,76,76)"/>
<rect x="333.0" y="291.2" width="36.8" height="28.8" fill="rgb(70,73,77)"/>
<rect x="333.0" y="291.2" width="36.8" height="56.8" fill="none" stroke="#c4c4c4" stroke-width="1.1"/>
<text x="351.36" y="357" font-size="7.5" fill="#e8e8e8" text-anchor="middle" font-weight="normal" stroke="#e8e8e8" stroke-width="0.2">30</text>
<rect x="377.0" y="291.2" width="36.8" height="56.8" fill="rgb(89,89,89)"/>
<rect x="377.0" y="291.2" width="36.8" height="28.8" fill="rgb(82,86,90)"/>
<rect x="377.0" y="291.2" width="36.8" height="56.8" fill="none" stroke="#c4c4c4" stroke-width="1.1"/>
<text x="395.41999999999996" y="357" font-size="7.5" fill="#e8e8e8" text-anchor="middle" font-weight="normal" stroke="#e8e8e8" stroke-width="0.2">35</text>
<rect x="421.1" y="291.2" width="36.8" height="56.8" fill="rgb(102,102,102)"/>
<rect x="421.1" y="291.2" width="36.8" height="28.8" fill="rgb(95,99,104)"/>
<rect x="421.1" y="291.2" width="36.8" height="56.8" fill="none" stroke="#c4c4c4" stroke-width="1.1"/>
<text x="439.48" y="357" font-size="7.5" fill="#e8e8e8" text-anchor="middle" font-weight="normal" stroke="#e8e8e8" stroke-width="0.2">40</text>
<rect x="465.1" y="291.2" width="36.8" height="56.8" fill="rgb(115,115,115)"/>
<rect x="465.1" y="291.2" width="36.8" height="28.8" fill="rgb(108,113,117)"/>
<rect x="465.1" y="291.2" width="36.8" height="56.8" fill="none" stroke="#c4c4c4" stroke-width="1.1"/>
<text x="483.53999999999996" y="357" font-size="7.5" fill="#e8e8e8" text-anchor="middle" font-weight="normal" stroke="#e8e8e8" stroke-width="0.2">45</text>
<rect x="509.2" y="291.2" width="36.8" height="56.8" fill="rgb(127,127,127)"/>
<rect x="509.2" y="291.2" width="36.8" height="28.8" fill="rgb(121,126,132)"/>
<rect x="509.2" y="291.2" width="36.8" height="56.8" fill="none" stroke="#c4c4c4" stroke-width="1.1"/>
<text x="527.6" y="357" font-size="7.5" fill="#e8e8e8" text-anchor="middle" font-weight="normal" stroke="#e8e8e8" stroke-width="0.2">50</text>
<rect x="553.3" y="291.2" width="36.8" height="56.8" fill="rgb(140,140,140)"/>
<rect x="553.3" y="291.2" width="36.8" height="28.8" fill="rgb(131,138,144)"/>
<rect x="553.3" y="291.2" width="36.8" height="56.8" fill="none" stroke="#c4c4c4" stroke-width="1.1"/>
<text x="571.66" y="357" font-size="7.5" fill="#e8e8e8" text-anchor="middle" font-weight="normal" stroke="#e8e8e8" stroke-width="0.2">55</text>
<rect x="597.3" y="291.2" width="36.8" height="56.8" fill="rgb(153,153,153)"/>
<rect x="597.3" y="291.2" width="36.8" height="28.8" fill="rgb(142,150,156)"/>
<rect x="597.3" y="291.2" width="36.8" height="56.8" fill="none" stroke="#c4c4c4" stroke-width="1.1"/>
<text x="615.72" y="357" font-size="7.5" fill="#e8e8e8" text-anchor="middle" font-weight="normal" stroke="#e8e8e8" stroke-width="0.2">60</text>
<rect x="641.4" y="291.2" width="36.8" height="56.8" fill="rgb(166,166,166)"/>
<rect x="641.4" y="291.2" width="36.8" height="28.8" fill="rgb(154,163,170)"/>
<rect x="641.4" y="291.2" width="36.8" height="56.8" fill="none" stroke="#c4c4c4" stroke-width="1.1"/>
<text x="659.78" y="357" font-size="7.5" fill="#e8e8e8" text-anchor="middle" font-weight="normal" stroke="#e8e8e8" stroke-width="0.2">65</text>
<rect x="685.4" y="291.2" width="36.8" height="56.8" fill="rgb(178,178,178)"/>
<rect x="685.4" y="291.2" width="36.8" height="28.8" fill="rgb(167,177,183)"/>
<rect x="685.4" y="291.2" width="36.8" height="56.8" fill="none" stroke="#c4c4c4" stroke-width="1.1"/>
<text x="703.84" y="357" font-size="7.5" fill="#e8e8e8" text-anchor="middle" font-weight="normal" stroke="#e8e8e8" stroke-width="0.2">70</text>
<rect x="729.5" y="291.2" width="36.8" height="56.8" fill="rgb(191,191,191)"/>
<rect x="729.5" y="291.2" width="36.8" height="28.8" fill="rgb(179,188,195)"/>
<rect x="729.5" y="291.2" width="36.8" height="56.8" fill="none" stroke="#c4c4c4" stroke-width="1.1"/>
<text x="747.9000000000001" y="357" font-size="7.5" fill="#e8e8e8" text-anchor="middle" font-weight="normal" stroke="#e8e8e8" stroke-width="0.2">75</text>
<rect x="773.6" y="291.2" width="36.8" height="56.8" fill="rgb(204,204,204)"/>
<rect x="773.6" y="291.2" width="36.8" height="28.8" fill="rgb(189,199,208)"/>
<rect x="773.6" y="291.2" width="36.8" height="56.8" fill="none" stroke="#c4c4c4" stroke-width="1.1"/>
<text x="791.96" y="357" font-size="7.5" fill="#e8e8e8" text-anchor="middle" font-weight="normal" stroke="#e8e8e8" stroke-width="0.2">80</text>
<rect x="817.6" y="291.2" width="36.8" height="56.8" fill="rgb(217,217,217)"/>
<rect x="817.6" y="291.2" width="36.8" height="28.8" fill="rgb(203,214,221)"/>
<rect x="817.6" y="291.2" width="36.8" height="56.8" fill="none" stroke="#c4c4c4" stroke-width="1.1"/>
<text x="836.02" y="357" font-size="7.5" fill="#e8e8e8" text-anchor="middle" font-weight="normal" stroke="#e8e8e8" stroke-width="0.2">85</text>
<rect x="861.7" y="291.2" width="36.8" height="56.8" fill="rgb(229,229,229)"/>
<rect x="861.7" y="291.2" width="36.8" height="28.8" fill="rgb(212,226,235)"/>
<rect x="861.7" y="291.2" width="36.8" height="56.8" fill="none" stroke="#c4c4c4" stroke-width="1.1"/>
<text x="880.08" y="357" font-size="7.5" fill="#e8e8e8" text-anchor="middle" font-weight="normal" stroke="#e8e8e8" stroke-width="0.2">90</text>
<rect x="905.7" y="291.2" width="36.8" height="56.8" fill="rgb(242,242,242)"/>
<rect x="905.7" y="291.2" width="36.8" height="28.8" fill="rgb(225,238,247)"/>
<rect x="905.7" y="291.2" width="36.8" height="56.8" fill="none" stroke="#c4c4c4" stroke-width="1.1"/>
<text x="924.1400000000001" y="357" font-size="7.5" fill="#e8e8e8" text-anchor="middle" font-weight="normal" stroke="#e8e8e8" stroke-width="0.2">95</text>
<rect x="949.8" y="291.2" width="36.8" height="56.8" fill="rgb(242,242,242)"/>
<rect x="949.8" y="291.2" width="36.8" height="28.8" fill="rgb(224,241,249)"/>
<rect x="949.8" y="291.2" width="36.8" height="56.8" fill="none" stroke="#c4c4c4" stroke-width="1.1"/>
<text x="968.2" y="357" font-size="7.5" fill="#e8e8e8" text-anchor="middle" font-weight="normal" stroke="#e8e8e8" stroke-width="0.2">100</text>
<text x="13.2" y="399.5" font-size="17.2" fill="#f2f2f2" text-anchor="start" font-weight="normal" textLength="131" lengthAdjust="spacingAndGlyphs" stroke="#f2f2f2" stroke-width="0.3">Current Reading</text>
<text x="13.2" y="424" font-size="14.6" fill="#f2f2f2" text-anchor="start" font-weight="normal" textLength="61.3" lengthAdjust="spacingAndGlyphs" stroke="#f2f2f2" stroke-width="0.25">x: 0,2976</text>
<text x="102.3" y="424" font-size="14.6" fill="#f2f2f2" text-anchor="start" font-weight="normal" textLength="61.7" lengthAdjust="spacingAndGlyphs" stroke="#f2f2f2" stroke-width="0.25">y: 0,3213</text>
<text x="13.2" y="443.2" font-size="14.6" fill="#f2f2f2" text-anchor="start" font-weight="normal" textLength="66" lengthAdjust="spacingAndGlyphs" stroke="#f2f2f2" stroke-width="0.25">u': 0,1901</text>
<text x="102.3" y="443.2" font-size="14.6" fill="#f2f2f2" text-anchor="start" font-weight="normal" textLength="65.7" lengthAdjust="spacingAndGlyphs" stroke="#f2f2f2" stroke-width="0.25">v': 0,4619</text>
<text x="13.2" y="462.5" font-size="14.6" fill="#f2f2f2" text-anchor="start" font-weight="normal" textLength="111.8" lengthAdjust="spacingAndGlyphs" stroke="#f2f2f2" stroke-width="0.25">cd/m²: 502,8334</text>
<text x="13.2" y="481.4" font-size="14.6" fill="#f2f2f2" text-anchor="start" font-weight="normal" textLength="91.8" lengthAdjust="spacingAndGlyphs" stroke="#f2f2f2" stroke-width="0.25">ΔE 2000: 7,25</text>
<text x="283.8" y="380" font-size="8" fill="#dcdcdc" text-anchor="middle" font-weight="normal" textLength="45.6" lengthAdjust="spacingAndGlyphs" >CIE 1931 xy</text>
<linearGradient id="cie0" x1="0" x2="1" y1="0" y2="0"><stop offset="0.000" stop-color="#80fad2"/><stop offset="0.167" stop-color="#a0fad1"/><stop offset="0.333" stop-color="#bbfad0"/><stop offset="0.500" stop-color="#d3facf"/><stop offset="0.667" stop-color="#e9face"/><stop offset="0.833" stop-color="#faf6ca"/><stop offset="1.000" stop-color="#fae3b5"/></linearGradient>
<rect x="218" y="383" width="152" height="2" fill="url(#cie0)" shape-rendering="crispEdges"/>
<linearGradient id="cie1" x1="0" x2="1" y1="0" y2="0"><stop offset="0.000" stop-color="#83fad4"/><stop offset="0.167" stop-color="#a2fad3"/><stop offset="0.333" stop-color="#bdfad2"/><stop offset="0.500" stop-color="#d4fad1"/><stop offset="0.667" stop-color="#eafad0"/><stop offset="0.833" stop-color="#faf4ca"/><stop offset="1.000" stop-color="#fae1b6"/></linearGradient>
<rect x="218" y="385" width="152" height="2" fill="url(#cie1)" shape-rendering="crispEdges"/>
<linearGradient id="cie2" x1="0" x2="1" y1="0" y2="0"><stop offset="0.000" stop-color="#85fad6"/><stop offset="0.167" stop-color="#a4fad5"/><stop offset="0.333" stop-color="#befad4"/><stop offset="0.500" stop-color="#d6fad3"/><stop offset="0.667" stop-color="#ecfad2"/><stop offset="0.833" stop-color="#faf3ca"/><stop offset="1.000" stop-color="#fae0b6"/></linearGradient>
<rect x="218" y="387" width="152" height="2" fill="url(#cie2)" shape-rendering="crispEdges"/>
<linearGradient id="cie3" x1="0" x2="1" y1="0" y2="0"><stop offset="0.000" stop-color="#87fad7"/><stop offset="0.167" stop-color="#a6fad6"/><stop offset="0.333" stop-color="#c0fad6"/><stop offset="0.500" stop-color="#d8fad5"/><stop offset="0.667" stop-color="#edfad4"/><stop offset="0.833" stop-color="#faf1cb"/><stop offset="1.000" stop-color="#fadeb6"/></linearGradient>
<rect x="218" y="389" width="152" height="2" fill="url(#cie3)" shape-rendering="crispEdges"/>
<linearGradient id="cie4" x1="0" x2="1" y1="0" y2="0"><stop offset="0.000" stop-color="#89fad9"/><stop offset="0.167" stop-color="#a8fad8"/><stop offset="0.333" stop-color="#c2fad7"/><stop offset="0.500" stop-color="#d9fad6"/><stop offset="0.667" stop-color="#effad6"/><stop offset="0.833" stop-color="#faf0cb"/><stop offset="1.000" stop-color="#faddb7"/></linearGradient>
<rect x="218" y="391" width="152" height="2" fill="url(#cie4)" shape-rendering="crispEdges"/>
<linearGradient id="cie5" x1="0" x2="1" y1="0" y2="0"><stop offset="0.000" stop-color="#8bfada"/><stop offset="0.167" stop-color="#a9fada"/><stop offset="0.333" stop-color="#c3fad9"/><stop offset="0.500" stop-color="#dbfad8"/><stop offset="0.667" stop-color="#f0fad7"/><stop offset="0.833" stop-color="#faeecb"/><stop offset="1.000" stop-color="#fadbb7"/></linearGradient>
<rect x="218" y="393" width="152" height="2" fill="url(#cie5)" shape-rendering="crispEdges"/>
<linearGradient id="cie6" x1="0" x2="1" y1="0" y2="0"><stop offset="0.000" stop-color="#8dfadc"/><stop offset="0.167" stop-color="#abfadb"/><stop offset="0.333" stop-color="#c5fadb"/><stop offset="0.500" stop-color="#dcfada"/><stop offset="0.667" stop-color="#f2fad9"/><stop offset="0.833" stop-color="#faedcc"/><stop offset="1.000" stop-color="#fadab8"/></linearGradient>
<rect x="218" y="395" width="152" height="2" fill="url(#cie6)" shape-rendering="crispEdges"/>
<linearGradient id="cie7" x1="0" x2="1" y1="0" y2="0"><stop offset="0.000" stop-color="#8ffade"/><stop offset="0.167" stop-color="#adfadd"/><stop offset="0.333" stop-color="#c7fadc"/><stop offset="0.500" stop-color="#defadc"/><stop offset="0.667" stop-color="#f4fadb"/><stop offset="0.833" stop-color="#faebcc"/><stop offset="1.000" stop-color="#fad8b8"/></linearGradient>
<rect x="218" y="397" width="152" height="2" fill="url(#cie7)" shape-rendering="crispEdges"/>
<linearGradient id="cie8" x1="0" x2="1" y1="0" y2="0"><stop offset="0.000" stop-color="#91fadf"/><stop offset="0.167" stop-color="#affadf"/><stop offset="0.333" stop-color="#c8fade"/><stop offset="0.500" stop-color="#e0fadd"/><stop offset="0.667" stop-color="#f5fadd"/><stop offset="0.833" stop-color="#fae9cc"/><stop offset="1.000" stop-color="#fad7b8"/></linearGradient>
<rect x="218" y="399" width="152" height="2" fill="url(#cie8)" shape-rendering="crispEdges"/>
<linearGradient id="cie9" x1="0" x2="1" y1="0" y2="0"><stop offset="0.000" stop-color="#93fae1"/><stop offset="0.167" stop-color="#b1fae0"/><stop offset="0.333" stop-color="#cafae0"/><stop offset="0.500" stop-color="#e1fadf"/><stop offset="0.667" stop-color="#f7fadf"/><stop offset="0.833" stop-color="#fae8cc"/><stop offset="1.000" stop-color="#fad5b9"/></linearGradient>
<rect x="218" y="401" width="152" height="2" fill="url(#cie9)" shape-rendering="crispEdges"/>
<linearGradient id="cie10" x1="0" x2="1" y1="0" y2="0"><stop offset="0.000" stop-color="#95fae3"/><stop offset="0.167" stop-color="#b2fae2"/><stop offset="0.333" stop-color="#ccfae2"/><stop offset="0.500" stop-color="#e3fae1"/><stop offset="0.667" stop-color="#f8fae0"/><stop offset="0.833" stop-color="#fae6cd"/><stop offset="1.000" stop-color="#fad3b9"/></linearGradient>
<rect x="218" y="403" width="152" height="2" fill="url(#cie10)" shape-rendering="crispEdges"/>
<linearGradient id="cie11" x1="0" x2="1" y1="0" y2="0"><stop offset="0.000" stop-color="#97fae4"/><stop offset="0.167" stop-color="#b4fae4"/><stop offset="0.333" stop-color="#cdfae3"/><stop offset="0.500" stop-color="#e5fae3"/><stop offset="0.667" stop-color="#faf9e2"/><stop offset="0.833" stop-color="#fae5cd"/><stop offset="1.000" stop-color="#fad2b9"/></linearGradient>
<rect x="218" y="405" width="152" height="2" fill="url(#cie11)" shape-rendering="crispEdges"/>
<linearGradient id="cie12" x1="0" x2="1" y1="0" y2="0"><stop offset="0.000" stop-color="#99fae6"/><stop offset="0.167" stop-color="#b6fae6"/><stop offset="0.333" stop-color="#cffae5"/><stop offset="0.500" stop-color="#e6fae5"/><stop offset="0.667" stop-color="#faf7e2"/><stop offset="0.833" stop-color="#fae3cd"/><stop offset="1.000" stop-color="#fad0ba"/></linearGradient>
<rect x="218" y="407" width="152" height="2" fill="url(#cie12)" shape-rendering="crispEdges"/>
<linearGradient id="cie13" x1="0" x2="1" y1="0" y2="0"><stop offset="0.000" stop-color="#9bfae8"/><stop offset="0.167" stop-color="#b8fae7"/><stop offset="0.333" stop-color="#d1fae7"/><stop offset="0.500" stop-color="#e8fae6"/><stop offset="0.667" stop-color="#faf6e2"/><stop offset="0.833" stop-color="#fae2ce"/><stop offset="1.000" stop-color="#facfba"/></linearGradient>
<rect x="218" y="409" width="152" height="2" fill="url(#cie13)" shape-rendering="crispEdges"/>
<linearGradient id="cie14" x1="0" x2="1" y1="0" y2="0"><stop offset="0.000" stop-color="#9dfae9"/><stop offset="0.167" stop-color="#b9fae9"/><stop offset="0.333" stop-color="#d2fae9"/><stop offset="0.500" stop-color="#e9fae8"/><stop offset="0.667" stop-color="#faf4e2"/><stop offset="0.833" stop-color="#fae0ce"/><stop offset="1.000" stop-color="#facdbb"/></linearGradient>
<rect x="218" y="411" width="152" height="2" fill="url(#cie14)" shape-rendering="crispEdges"/>
<linearGradient id="cie15" x1="0" x2="1" y1="0" y2="0"><stop offset="0.000" stop-color="#9ffaeb"/><stop offset="0.167" stop-color="#bbfaeb"/><stop offset="0.333" stop-color="#d4faea"/><stop offset="0.500" stop-color="#ebfaea"/><stop offset="0.667" stop-color="#faf2e3"/><stop offset="0.833" stop-color="#fadece"/><stop offset="1.000" stop-color="#faccbb"/></linearGradient>
<rect x="218" y="413" width="152" height="2" fill="url(#cie15)" shape-rendering="crispEdges"/>
<linearGradient id="cie16" x1="0" x2="1" y1="0" y2="0"><stop offset="0.000" stop-color="#a1faed"/><stop offset="0.167" stop-color="#bdfaec"/><stop offset="0.333" stop-color="#d6faec"/><stop offset="0.500" stop-color="#edfaec"/><stop offset="0.667" stop-color="#faf1e3"/><stop offset="0.833" stop-color="#faddcf"/><stop offset="1.000" stop-color="#facabb"/></linearGradient>
<rect x="218" y="415" width="152" height="2" fill="url(#cie16)" shape-rendering="crispEdges"/>
<linearGradient id="cie17" x1="0" x2="1" y1="0" y2="0"><stop offset="0.000" stop-color="#a3faee"/><stop offset="0.167" stop-color="#bffaee"/><stop offset="0.333" stop-color="#d8faee"/><stop offset="0.500" stop-color="#eefaee"/><stop offset="0.667" stop-color="#faefe3"/><stop offset="0.833" stop-color="#fadbcf"/><stop offset="1.000" stop-color="#fac8bc"/></linearGradient>
<rect x="218" y="417" width="152" height="2" fill="url(#cie17)" shape-rendering="crispEdges"/>
<linearGradient id="cie18" x1="0" x2="1" y1="0" y2="0"><stop offset="0.000" stop-color="#a5faf0"/><stop offset="0.167" stop-color="#c0faf0"/><stop offset="0.333" stop-color="#d9faf0"/><stop offset="0.500" stop-color="#f0faef"/><stop offset="0.667" stop-color="#faeee3"/><stop offset="0.833" stop-color="#fadacf"/><stop offset="1.000" stop-color="#fac7bc"/></linearGradient>
<rect x="218" y="419" width="152" height="2" fill="url(#cie18)" shape-rendering="crispEdges"/>
<linearGradient id="cie19" x1="0" x2="1" y1="0" y2="0"><stop offset="0.000" stop-color="#a6faf2"/><stop offset="0.167" stop-color="#c2faf1"/><stop offset="0.333" stop-color="#dbfaf1"/><stop offset="0.500" stop-color="#f2faf1"/><stop offset="0.667" stop-color="#faece3"/><stop offset="0.833" stop-color="#fad8cf"/><stop offset="1.000" stop-color="#fac5bc"/></linearGradient>
<rect x="218" y="421" width="152" height="2" fill="url(#cie19)" shape-rendering="crispEdges"/>
<linearGradient id="cie20" x1="0" x2="1" y1="0" y2="0"><stop offset="0.000" stop-color="#a8faf3"/><stop offset="0.167" stop-color="#c4faf3"/><stop offset="0.333" stop-color="#ddfaf3"/><stop offset="0.500" stop-color="#f3faf3"/><stop offset="0.667" stop-color="#faeae4"/><stop offset="0.833" stop-color="#fad6d0"/><stop offset="1.000" stop-color="#fac4bd"/></linearGradient>
<rect x="218" y="423" width="152" height="2" fill="url(#cie20)" shape-rendering="crispEdges"/>
<linearGradient id="cie21" x1="0" x2="1" y1="0" y2="0"><stop offset="0.000" stop-color="#aafaf5"/><stop offset="0.167" stop-color="#c6faf5"/><stop offset="0.333" stop-color="#defaf5"/><stop offset="0.500" stop-color="#f5faf5"/><stop offset="0.667" stop-color="#fae9e4"/><stop offset="0.833" stop-color="#fad5d0"/><stop offset="1.000" stop-color="#fac2bd"/></linearGradient>
<rect x="218" y="425" width="152" height="2" fill="url(#cie21)" shape-rendering="crispEdges"/>
<linearGradient id="cie22" x1="0" x2="1" y1="0" y2="0"><stop offset="0.000" stop-color="#acfaf7"/><stop offset="0.167" stop-color="#c8faf7"/><stop offset="0.333" stop-color="#e0faf7"/><stop offset="0.500" stop-color="#f7faf7"/><stop offset="0.667" stop-color="#fae7e4"/><stop offset="0.833" stop-color="#fad3d0"/><stop offset="1.000" stop-color="#fac0bd"/></linearGradient>
<rect x="218" y="427" width="152" height="2" fill="url(#cie22)" shape-rendering="crispEdges"/>
<linearGradient id="cie23" x1="0" x2="1" y1="0" y2="0"><stop offset="0.000" stop-color="#aefaf8"/><stop offset="0.167" stop-color="#c9faf8"/><stop offset="0.333" stop-color="#e2faf8"/><stop offset="0.500" stop-color="#f8faf8"/><stop offset="0.667" stop-color="#fae5e4"/><stop offset="0.833" stop-color="#fad1d0"/><stop offset="1.000" stop-color="#fabfbe"/></linearGradient>
<rect x="218" y="429" width="152" height="2" fill="url(#cie23)" shape-rendering="crispEdges"/>
<linearGradient id="cie24" x1="0" x2="1" y1="0" y2="0"><stop offset="0.000" stop-color="#aff9fa"/><stop offset="0.167" stop-color="#caf9fa"/><stop offset="0.333" stop-color="#e3f9fa"/><stop offset="0.500" stop-color="#f9f9fa"/><stop offset="0.667" stop-color="#fae4e4"/><stop offset="0.833" stop-color="#fad0d1"/><stop offset="1.000" stop-color="#fabdbe"/></linearGradient>
<rect x="218" y="431" width="152" height="2" fill="url(#cie24)" shape-rendering="crispEdges"/>
<linearGradient id="cie25" x1="0" x2="1" y1="0" y2="0"><stop offset="0.000" stop-color="#b0f7fa"/><stop offset="0.167" stop-color="#cbf7fa"/><stop offset="0.333" stop-color="#e3f7fa"/><stop offset="0.500" stop-color="#f9f7fa"/><stop offset="0.667" stop-color="#fae2e5"/><stop offset="0.833" stop-color="#faced1"/><stop offset="1.000" stop-color="#fabbbe"/></linearGradient>
<rect x="218" y="433" width="152" height="2" fill="url(#cie25)" shape-rendering="crispEdges"/>
<linearGradient id="cie26" x1="0" x2="1" y1="0" y2="0"><stop offset="0.000" stop-color="#b0f6fa"/><stop offset="0.167" stop-color="#cbf5fa"/><stop offset="0.333" stop-color="#e3f5fa"/><stop offset="0.500" stop-color="#f9f5fa"/><stop offset="0.667" stop-color="#fae0e5"/><stop offset="0.833" stop-color="#facdd1"/><stop offset="1.000" stop-color="#fababf"/></linearGradient>
<rect x="218" y="435" width="152" height="2" fill="url(#cie26)" shape-rendering="crispEdges"/>
<linearGradient id="cie27" x1="0" x2="1" y1="0" y2="0"><stop offset="0.000" stop-color="#b0f4fa"/><stop offset="0.167" stop-color="#cbf4fa"/><stop offset="0.333" stop-color="#e3f3fa"/><stop offset="0.500" stop-color="#f9f3fa"/><stop offset="0.667" stop-color="#fadfe5"/><stop offset="0.833" stop-color="#facbd1"/><stop offset="1.000" stop-color="#fab8bf"/></linearGradient>
<rect x="218" y="437" width="152" height="2" fill="url(#cie27)" shape-rendering="crispEdges"/>
<linearGradient id="cie28" x1="0" x2="1" y1="0" y2="0"><stop offset="0.000" stop-color="#b0f2fa"/><stop offset="0.167" stop-color="#cbf2fa"/><stop offset="0.333" stop-color="#e3f2fa"/><stop offset="0.500" stop-color="#f9f1fa"/><stop offset="0.667" stop-color="#fadde5"/><stop offset="0.833" stop-color="#fac9d2"/><stop offset="1.000" stop-color="#fab6bf"/></linearGradient>
<rect x="218" y="439" width="152" height="2" fill="url(#cie28)" shape-rendering="crispEdges"/>
<linearGradient id="cie29" x1="0" x2="1" y1="0" y2="0"><stop offset="0.000" stop-color="#b0f0fa"/><stop offset="0.167" stop-color="#cbf0fa"/><stop offset="0.333" stop-color="#e3f0fa"/><stop offset="0.500" stop-color="#f9f0fa"/><stop offset="0.667" stop-color="#fadbe5"/><stop offset="0.833" stop-color="#fac8d2"/><stop offset="1.000" stop-color="#fab5c0"/></linearGradient>
<rect x="218" y="441" width="152" height="2" fill="url(#cie29)" shape-rendering="crispEdges"/>
<linearGradient id="cie30" x1="0" x2="1" y1="0" y2="0"><stop offset="0.000" stop-color="#b0effa"/><stop offset="0.167" stop-color="#cbeefa"/><stop offset="0.333" stop-color="#e3eefa"/><stop offset="0.500" stop-color="#f9eefa"/><stop offset="0.667" stop-color="#fadae6"/><stop offset="0.833" stop-color="#fac6d2"/><stop offset="1.000" stop-color="#fab3c0"/></linearGradient>
<rect x="218" y="443" width="152" height="2" fill="url(#cie30)" shape-rendering="crispEdges"/>
<linearGradient id="cie31" x1="0" x2="1" y1="0" y2="0"><stop offset="0.000" stop-color="#b1edfa"/><stop offset="0.167" stop-color="#cbedfa"/><stop offset="0.333" stop-color="#e3ecfa"/><stop offset="0.500" stop-color="#f9ecfa"/><stop offset="0.667" stop-color="#fad8e6"/><stop offset="0.833" stop-color="#fac4d3"/><stop offset="1.000" stop-color="#fab1c0"/></linearGradient>
<rect x="218" y="445" width="152" height="2" fill="url(#cie31)" shape-rendering="crispEdges"/>
<linearGradient id="cie32" x1="0" x2="1" y1="0" y2="0"><stop offset="0.000" stop-color="#b1ebfa"/><stop offset="0.167" stop-color="#cbebfa"/><stop offset="0.333" stop-color="#e2ebfa"/><stop offset="0.500" stop-color="#f8eafa"/><stop offset="0.667" stop-color="#fad6e6"/><stop offset="0.833" stop-color="#fac3d3"/><stop offset="1.000" stop-color="#fab0c0"/></linearGradient>
<rect x="218" y="447" width="152" height="2" fill="url(#cie32)" shape-rendering="crispEdges"/>
<linearGradient id="cie33" x1="0" x2="1" y1="0" y2="0"><stop offset="0.000" stop-color="#b1eafa"/><stop offset="0.167" stop-color="#cbe9fa"/><stop offset="0.333" stop-color="#e2e9fa"/><stop offset="0.500" stop-color="#f8e8fa"/><stop offset="0.667" stop-color="#fad5e6"/><stop offset="0.833" stop-color="#fac1d3"/><stop offset="1.000" stop-color="#faaec1"/></linearGradient>
<rect x="218" y="449" width="152" height="2" fill="url(#cie33)" shape-rendering="crispEdges"/>
<linearGradient id="cie34" x1="0" x2="1" y1="0" y2="0"><stop offset="0.000" stop-color="#b1e8fa"/><stop offset="0.167" stop-color="#cbe7fa"/><stop offset="0.333" stop-color="#e2e7fa"/><stop offset="0.500" stop-color="#f8e6fa"/><stop offset="0.667" stop-color="#fad3e6"/><stop offset="0.833" stop-color="#fabfd3"/><stop offset="1.000" stop-color="#faacc1"/></linearGradient>
<rect x="218" y="451" width="152" height="2" fill="url(#cie34)" shape-rendering="crispEdges"/>
<linearGradient id="cie35" x1="0" x2="1" y1="0" y2="0"><stop offset="0.000" stop-color="#b1e6fa"/><stop offset="0.167" stop-color="#cbe6fa"/><stop offset="0.333" stop-color="#e2e5fa"/><stop offset="0.500" stop-color="#f8e5fa"/><stop offset="0.667" stop-color="#fad1e7"/><stop offset="0.833" stop-color="#fabdd4"/><stop offset="1.000" stop-color="#faaac1"/></linearGradient>
<rect x="218" y="453" width="152" height="2" fill="url(#cie35)" shape-rendering="crispEdges"/>
<linearGradient id="cie36" x1="0" x2="1" y1="0" y2="0"><stop offset="0.000" stop-color="#b1e4fa"/><stop offset="0.167" stop-color="#cbe4fa"/><stop offset="0.333" stop-color="#e2e3fa"/><stop offset="0.500" stop-color="#f8e3fa"/><stop offset="0.667" stop-color="#facfe7"/><stop offset="0.833" stop-color="#fabcd4"/><stop offset="1.000" stop-color="#faa8c2"/></linearGradient>
<rect x="218" y="455" width="152" height="2" fill="url(#cie36)" shape-rendering="crispEdges"/>
<linearGradient id="cie37" x1="0" x2="1" y1="0" y2="0"><stop offset="0.000" stop-color="#b1e3fa"/><stop offset="0.167" stop-color="#cbe2fa"/><stop offset="0.333" stop-color="#e2e1fa"/><stop offset="0.500" stop-color="#f8e1fa"/><stop offset="0.667" stop-color="#facee7"/><stop offset="0.833" stop-color="#fabad4"/><stop offset="1.000" stop-color="#faa7c2"/></linearGradient>
<rect x="218" y="457" width="152" height="2" fill="url(#cie37)" shape-rendering="crispEdges"/>
<linearGradient id="cie38" x1="0" x2="1" y1="0" y2="0"><stop offset="0.000" stop-color="#b2e1fa"/><stop offset="0.167" stop-color="#cbe0fa"/><stop offset="0.333" stop-color="#e2e0fa"/><stop offset="0.500" stop-color="#f8dffa"/><stop offset="0.667" stop-color="#facce7"/><stop offset="0.833" stop-color="#fab8d4"/><stop offset="1.000" stop-color="#faa5c2"/></linearGradient>
<rect x="218" y="459" width="152" height="2" fill="url(#cie38)" shape-rendering="crispEdges"/>
<linearGradient id="cie39" x1="0" x2="1" y1="0" y2="0"><stop offset="0.000" stop-color="#b2dffa"/><stop offset="0.167" stop-color="#cbdffa"/><stop offset="0.333" stop-color="#e2defa"/><stop offset="0.500" stop-color="#f8ddfa"/><stop offset="0.667" stop-color="#facae7"/><stop offset="0.833" stop-color="#fab6d4"/><stop offset="1.000" stop-color="#faa3c3"/></linearGradient>
<rect x="218" y="461" width="152" height="2" fill="url(#cie39)" shape-rendering="crispEdges"/>
<linearGradient id="cie40" x1="0" x2="1" y1="0" y2="0"><stop offset="0.000" stop-color="#b2defa"/><stop offset="0.167" stop-color="#cbddfa"/><stop offset="0.333" stop-color="#e2dcfa"/><stop offset="0.500" stop-color="#f7dbfa"/><stop offset="0.667" stop-color="#fac8e7"/><stop offset="0.833" stop-color="#fab5d5"/><stop offset="1.000" stop-color="#faa1c3"/></linearGradient>
<rect x="218" y="463" width="152" height="2" fill="url(#cie40)" shape-rendering="crispEdges"/>
<linearGradient id="cie41" x1="0" x2="1" y1="0" y2="0"><stop offset="0.000" stop-color="#b2dcfa"/><stop offset="0.167" stop-color="#cbdbfa"/><stop offset="0.333" stop-color="#e2dafa"/><stop offset="0.500" stop-color="#f7d9fa"/><stop offset="0.667" stop-color="#fac7e8"/><stop offset="0.833" stop-color="#fab3d5"/><stop offset="1.000" stop-color="#fa9fc3"/></linearGradient>
<rect x="218" y="465" width="152" height="2" fill="url(#cie41)" shape-rendering="crispEdges"/>
<linearGradient id="cie42" x1="0" x2="1" y1="0" y2="0"><stop offset="0.000" stop-color="#b2dafa"/><stop offset="0.167" stop-color="#cbd9fa"/><stop offset="0.333" stop-color="#e2d8fa"/><stop offset="0.500" stop-color="#f7d7fa"/><stop offset="0.667" stop-color="#fac5e8"/><stop offset="0.833" stop-color="#fab1d5"/><stop offset="1.000" stop-color="#fa9ec3"/></linearGradient>
<rect x="218" y="467" width="152" height="2" fill="url(#cie42)" shape-rendering="crispEdges"/>
<linearGradient id="cie43" x1="0" x2="1" y1="0" y2="0"><stop offset="0.000" stop-color="#b2d8fa"/><stop offset="0.167" stop-color="#cbd7fa"/><stop offset="0.333" stop-color="#e2d7fa"/><stop offset="0.500" stop-color="#f7d6fa"/><stop offset="0.667" stop-color="#fac3e8"/><stop offset="0.833" stop-color="#faafd5"/><stop offset="1.000" stop-color="#fa9cc4"/></linearGradient>
<rect x="218" y="469" width="152" height="2" fill="url(#cie43)" shape-rendering="crispEdges"/>
<linearGradient id="cie44" x1="0" x2="1" y1="0" y2="0"><stop offset="0.000" stop-color="#b3d7fa"/><stop offset="0.167" stop-color="#cbd6fa"/><stop offset="0.333" stop-color="#e2d5fa"/><stop offset="0.500" stop-color="#f7d4fa"/><stop offset="0.667" stop-color="#fac1e8"/><stop offset="0.833" stop-color="#faadd6"/><stop offset="1.000" stop-color="#fa9ac4"/></linearGradient>
<rect x="218" y="471" width="152" height="2" fill="url(#cie44)" shape-rendering="crispEdges"/>
<linearGradient id="cie45" x1="0" x2="1" y1="0" y2="0"><stop offset="0.000" stop-color="#b3d5fa"/><stop offset="0.167" stop-color="#cbd4fa"/><stop offset="0.333" stop-color="#e2d3fa"/><stop offset="0.500" stop-color="#f7d2fa"/><stop offset="0.667" stop-color="#fac0e8"/><stop offset="0.833" stop-color="#faacd6"/><stop offset="1.000" stop-color="#fa98c4"/></linearGradient>
<rect x="218" y="473" width="152" height="2" fill="url(#cie45)" shape-rendering="crispEdges"/>
<linearGradient id="cie46" x1="0" x2="1" y1="0" y2="0"><stop offset="0.000" stop-color="#b3d3fa"/><stop offset="0.167" stop-color="#cbd2fa"/><stop offset="0.333" stop-color="#e2d1fa"/><stop offset="0.500" stop-color="#f7d0fa"/><stop offset="0.667" stop-color="#fabee9"/><stop offset="0.833" stop-color="#faaad6"/><stop offset="1.000" stop-color="#fa96c5"/></linearGradient>
<rect x="218" y="475" width="152" height="2" fill="url(#cie46)" shape-rendering="crispEdges"/>
<line x1="214" y1="410.6" x2="218" y2="410.6" stroke="#aaa" stroke-width="0.8"/>
<text x="213.5" y="413.79999999999995" font-size="8.8" fill="#dedede" text-anchor="end" font-weight="normal" stroke="#dedede" stroke-width="0.22">0,34</text>
<line x1="214" y1="448.0" x2="218" y2="448.0" stroke="#aaa" stroke-width="0.8"/>
<text x="213.5" y="451.2" font-size="8.8" fill="#dedede" text-anchor="end" font-weight="normal" stroke="#dedede" stroke-width="0.22">0,32</text>
<line x1="225.4" y1="477" x2="225.4" y2="480" stroke="#aaa" stroke-width="0.8"/>
<text x="225.4" y="489.3" font-size="8.8" fill="#dedede" text-anchor="middle" font-weight="normal" stroke="#dedede" stroke-width="0.22">0,29</text>
<line x1="255.6" y1="477" x2="255.6" y2="480" stroke="#aaa" stroke-width="0.8"/>
<text x="255.60000000000002" y="489.3" font-size="8.8" fill="#dedede" text-anchor="middle" font-weight="normal" stroke="#dedede" stroke-width="0.22">0,3</text>
<line x1="285.8" y1="477" x2="285.8" y2="480" stroke="#aaa" stroke-width="0.8"/>
<text x="285.80000000000007" y="489.3" font-size="8.8" fill="#dedede" text-anchor="middle" font-weight="normal" stroke="#dedede" stroke-width="0.22">0,31</text>
<line x1="316.0" y1="477" x2="316.0" y2="480" stroke="#aaa" stroke-width="0.8"/>
<text x="316.0000000000001" y="489.3" font-size="8.8" fill="#dedede" text-anchor="middle" font-weight="normal" stroke="#dedede" stroke-width="0.22">0,32</text>
<line x1="346.2" y1="477" x2="346.2" y2="480" stroke="#aaa" stroke-width="0.8"/>
<text x="346.2000000000001" y="489.3" font-size="8.8" fill="#dedede" text-anchor="middle" font-weight="normal" stroke="#dedede" stroke-width="0.22">0,33</text>
<clipPath id="cclip"><rect x="218" y="383" width="152" height="94"/></clipPath>
<g clip-path="url(#cclip)">
<polyline points="234,479.28 238,476.58 242,473.90 246,471.24 250,468.59 254,465.97 258,463.37 262,460.78 266,458.21 270,455.66 274,453.13 278,450.62 282,448.13 286,445.65 290,443.20 294,440.76 298,438.34 302,435.94 306,433.56 310,431.20 314,428.85 318,426.53 322,424.22 326,421.93 330,419.66 334,417.41 338,415.18 342,412.97 346,410.77 350,408.60 354,406.44 358,404.30 362,402.18 366,400.08 370,397.99" fill="none" stroke="#111" stroke-width="1.7"/>
<rect x="289.6" y="425.5" width="8" height="8" fill="none" stroke="#111" stroke-width="1.5"/>
<circle cx="241.7" cy="464.2" r="2.8" fill="rgb(25,25,25)" stroke="#0a0a0a" stroke-width="1"/>
<circle cx="253.2" cy="454.4" r="2.8" fill="rgb(38,38,38)" stroke="#0a0a0a" stroke-width="1"/>
<circle cx="258.6" cy="451.3" r="2.8" fill="rgb(51,51,51)" stroke="#0a0a0a" stroke-width="1"/>
<circle cx="259.8" cy="444.3" r="2.8" fill="rgb(63,63,63)" stroke="#0a0a0a" stroke-width="1"/>
<circle cx="254.7" cy="452.0" r="2.8" fill="rgb(76,76,76)" stroke="#0a0a0a" stroke-width="1"/>
<circle cx="255.3" cy="450.0" r="2.8" fill="rgb(89,89,89)" stroke="#0a0a0a" stroke-width="1"/>
<circle cx="254.7" cy="451.4" r="2.8" fill="rgb(102,102,102)" stroke="#0a0a0a" stroke-width="1"/>
<circle cx="256.8" cy="447.3" r="2.8" fill="rgb(114,114,114)" stroke="#0a0a0a" stroke-width="1"/>
<circle cx="258.0" cy="448.3" r="2.8" fill="rgb(127,127,127)" stroke="#0a0a0a" stroke-width="1"/>
<circle cx="254.1" cy="449.2" r="2.8" fill="rgb(140,140,140)" stroke="#0a0a0a" stroke-width="1"/>
<circle cx="252.6" cy="446.4" r="2.8" fill="rgb(153,153,153)" stroke="#0a0a0a" stroke-width="1"/>
<circle cx="251.1" cy="448.3" r="2.8" fill="rgb(165,165,165)" stroke="#0a0a0a" stroke-width="1"/>
<circle cx="254.1" cy="445.5" r="2.8" fill="rgb(178,178,178)" stroke="#0a0a0a" stroke-width="1"/>
<circle cx="255.6" cy="446.8" r="2.8" fill="rgb(191,191,191)" stroke="#0a0a0a" stroke-width="1"/>
<circle cx="252.0" cy="449.2" r="2.8" fill="rgb(204,204,204)" stroke="#0a0a0a" stroke-width="1"/>
<circle cx="256.2" cy="444.5" r="2.8" fill="rgb(216,216,216)" stroke="#0a0a0a" stroke-width="1"/>
<circle cx="250.5" cy="447.3" r="2.8" fill="rgb(229,229,229)" stroke="#0a0a0a" stroke-width="1"/>
<circle cx="253.5" cy="446.4" r="2.8" fill="rgb(242,242,242)" stroke="#0a0a0a" stroke-width="1"/>
<circle cx="248.4" cy="444.0" r="2.8" fill="rgb(254,254,254)" stroke="#0a0a0a" stroke-width="1"/>
</g>
<path d="M218 383 V477 H370" fill="none" stroke="#8a8a8a" stroke-width="1"/>
<rect x="376" y="367" width="624" height="128" fill="#2a2a2a"/>
<rect x="384" y="367" width="616" height="16" fill="url(#hdr)"/>
<rect x="376" y="367" width="8" height="118" fill="#101010"/>
<text x="465.3" y="378.6" font-size="9.4" fill="#f8f8f8" text-anchor="start" font-weight="normal" stroke="#f8f8f8" stroke-width="0.35">0</text>
<text x="520.4" y="378.6" font-size="9.4" fill="#f8f8f8" text-anchor="start" font-weight="normal" stroke="#f8f8f8" stroke-width="0.35">5</text>
<text x="576.3" y="378.6" font-size="9.4" fill="#f8f8f8" text-anchor="start" font-weight="normal" stroke="#f8f8f8" stroke-width="0.35">10</text>
<text x="626.5" y="378.6" font-size="9.4" fill="#f8f8f8" text-anchor="start" font-weight="normal" stroke="#f8f8f8" stroke-width="0.35">15</text>
<text x="676" y="378.6" font-size="9.4" fill="#f8f8f8" text-anchor="start" font-weight="normal" stroke="#f8f8f8" stroke-width="0.35">20</text>
<text x="725.6" y="378.6" font-size="9.4" fill="#f8f8f8" text-anchor="start" font-weight="normal" stroke="#f8f8f8" stroke-width="0.35">25</text>
<text x="775.2" y="378.6" font-size="9.4" fill="#f8f8f8" text-anchor="start" font-weight="normal" stroke="#f8f8f8" stroke-width="0.35">30</text>
<text x="825.5" y="378.6" font-size="9.4" fill="#f8f8f8" text-anchor="start" font-weight="normal" stroke="#f8f8f8" stroke-width="0.35">35</text>
<text x="875.4" y="378.6" font-size="9.4" fill="#f8f8f8" text-anchor="start" font-weight="normal" stroke="#f8f8f8" stroke-width="0.35">40</text>
<text x="925.6" y="378.6" font-size="9.4" fill="#f8f8f8" text-anchor="start" font-weight="normal" stroke="#f8f8f8" stroke-width="0.35">45</text>
<text x="975.2" y="378.6" font-size="9.4" fill="#f8f8f8" text-anchor="start" font-weight="normal" stroke="#f8f8f8" stroke-width="0.35">50</text>
<clipPath id="tclip"><rect x="384" y="367" width="610" height="130"/></clipPath>
<g clip-path="url(#tclip)">
<rect x="384" y="383.0" width="616" height="14.5" fill="#3b3b3b"/>
<text x="386.6" y="393.7" font-size="10.2" fill="#f0f0f0" text-anchor="start" font-weight="normal" textLength="36.81" lengthAdjust="spacingAndGlyphs" >x: CIE31</text>
<text x="465.3" y="393.7" font-size="10.2" fill="#f0f0f0" text-anchor="start" font-weight="normal" textLength="29.36" lengthAdjust="spacingAndGlyphs" >0,2394</text>
<text x="520.4" y="393.7" font-size="10.2" fill="#f0f0f0" text-anchor="start" font-weight="normal" textLength="29.36" lengthAdjust="spacingAndGlyphs" >0,2806</text>
<text x="576.3" y="393.7" font-size="10.2" fill="#f0f0f0" text-anchor="start" font-weight="normal" textLength="29.36" lengthAdjust="spacingAndGlyphs" >0,2954</text>
<text x="626.5" y="393.7" font-size="10.2" fill="#f0f0f0" text-anchor="start" font-weight="normal" textLength="29.36" lengthAdjust="spacingAndGlyphs" >0,2992</text>
<text x="676" y="393.7" font-size="10.2" fill="#f0f0f0" text-anchor="start" font-weight="normal" textLength="29.36" lengthAdjust="spacingAndGlyphs" >0,3010</text>
<text x="725.6" y="393.7" font-size="10.2" fill="#f0f0f0" text-anchor="start" font-weight="normal" textLength="29.36" lengthAdjust="spacingAndGlyphs" >0,3014</text>
<text x="775.2" y="393.7" font-size="10.2" fill="#f0f0f0" text-anchor="start" font-weight="normal" textLength="29.36" lengthAdjust="spacingAndGlyphs" >0,2997</text>
<text x="825.5" y="393.7" font-size="10.2" fill="#f0f0f0" text-anchor="start" font-weight="normal" textLength="29.36" lengthAdjust="spacingAndGlyphs" >0,2999</text>
<text x="875.4" y="393.7" font-size="10.2" fill="#f0f0f0" text-anchor="start" font-weight="normal" textLength="29.36" lengthAdjust="spacingAndGlyphs" >0,2997</text>
<text x="925.6" y="393.7" font-size="10.2" fill="#f0f0f0" text-anchor="start" font-weight="normal" textLength="29.36" lengthAdjust="spacingAndGlyphs" >0,3004</text>
<text x="975.2" y="393.7" font-size="10.2" fill="#f0f0f0" text-anchor="start" font-weight="normal" textLength="18.68" lengthAdjust="spacingAndGlyphs" >0,30</text>
<rect x="384" y="397.5" width="616" height="14.5" fill="#777777"/>
<text x="386.6" y="408.2" font-size="10.2" fill="#f0f0f0" text-anchor="start" font-weight="normal" textLength="36.81" lengthAdjust="spacingAndGlyphs" >y: CIE31</text>
<text x="465.3" y="408.2" font-size="10.2" fill="#f0f0f0" text-anchor="start" font-weight="normal" textLength="29.36" lengthAdjust="spacingAndGlyphs" >0,2260</text>
<text x="520.4" y="408.2" font-size="10.2" fill="#f0f0f0" text-anchor="start" font-weight="normal" textLength="29.36" lengthAdjust="spacingAndGlyphs" >0,2855</text>
<text x="576.3" y="408.2" font-size="10.2" fill="#f0f0f0" text-anchor="start" font-weight="normal" textLength="29.36" lengthAdjust="spacingAndGlyphs" >0,3105</text>
<text x="626.5" y="408.2" font-size="10.2" fill="#f0f0f0" text-anchor="start" font-weight="normal" textLength="29.36" lengthAdjust="spacingAndGlyphs" >0,3157</text>
<text x="676" y="408.2" font-size="10.2" fill="#f0f0f0" text-anchor="start" font-weight="normal" textLength="29.36" lengthAdjust="spacingAndGlyphs" >0,3174</text>
<text x="725.6" y="408.2" font-size="10.2" fill="#f0f0f0" text-anchor="start" font-weight="normal" textLength="28.65" lengthAdjust="spacingAndGlyphs" >0,3211</text>
<text x="775.2" y="408.2" font-size="10.2" fill="#f0f0f0" text-anchor="start" font-weight="normal" textLength="29.36" lengthAdjust="spacingAndGlyphs" >0,3170</text>
<text x="825.5" y="408.2" font-size="10.2" fill="#f0f0f0" text-anchor="start" font-weight="normal" textLength="29.36" lengthAdjust="spacingAndGlyphs" >0,3181</text>
<text x="875.4" y="408.2" font-size="10.2" fill="#f0f0f0" text-anchor="start" font-weight="normal" textLength="29.36" lengthAdjust="spacingAndGlyphs" >0,3173</text>
<text x="925.6" y="408.2" font-size="10.2" fill="#f0f0f0" text-anchor="start" font-weight="normal" textLength="29.36" lengthAdjust="spacingAndGlyphs" >0,3195</text>
<text x="975.2" y="408.2" font-size="10.2" fill="#f0f0f0" text-anchor="start" font-weight="normal" textLength="18.68" lengthAdjust="spacingAndGlyphs" >0,31</text>
<rect x="384" y="412.0" width="616" height="14.5" fill="#3b3b3b"/>
<text x="386.6" y="422.7" font-size="10.2" fill="#f0f0f0" text-anchor="start" font-weight="normal" textLength="6.4" lengthAdjust="spacingAndGlyphs" >Y</text>
<text x="465.3" y="422.7" font-size="10.2" fill="#f0f0f0" text-anchor="start" font-weight="normal" textLength="29.36" lengthAdjust="spacingAndGlyphs" >0,3814</text>
<text x="520.4" y="422.7" font-size="10.2" fill="#f0f0f0" text-anchor="start" font-weight="normal" textLength="29.36" lengthAdjust="spacingAndGlyphs" >1,0027</text>
<text x="576.3" y="422.7" font-size="10.2" fill="#f0f0f0" text-anchor="start" font-weight="normal" textLength="29.36" lengthAdjust="spacingAndGlyphs" >3,3731</text>
<text x="626.5" y="422.7" font-size="10.2" fill="#f0f0f0" text-anchor="start" font-weight="normal" textLength="29.36" lengthAdjust="spacingAndGlyphs" >7,6756</text>
<text x="676" y="422.7" font-size="10.2" fill="#f0f0f0" text-anchor="start" font-weight="normal" textLength="34.7" lengthAdjust="spacingAndGlyphs" >14,7619</text>
<text x="725.6" y="422.7" font-size="10.2" fill="#f0f0f0" text-anchor="start" font-weight="normal" textLength="34.7" lengthAdjust="spacingAndGlyphs" >25,1097</text>
<text x="775.2" y="422.7" font-size="10.2" fill="#f0f0f0" text-anchor="start" font-weight="normal" textLength="34.7" lengthAdjust="spacingAndGlyphs" >34,9023</text>
<text x="825.5" y="422.7" font-size="10.2" fill="#f0f0f0" text-anchor="start" font-weight="normal" textLength="34.7" lengthAdjust="spacingAndGlyphs" >48,9295</text>
<text x="875.4" y="422.7" font-size="10.2" fill="#f0f0f0" text-anchor="start" font-weight="normal" textLength="34.7" lengthAdjust="spacingAndGlyphs" >65,9224</text>
<text x="925.6" y="422.7" font-size="10.2" fill="#f0f0f0" text-anchor="start" font-weight="normal" textLength="34.7" lengthAdjust="spacingAndGlyphs" >86,3371</text>
<text x="975.2" y="422.7" font-size="10.2" fill="#f0f0f0" text-anchor="start" font-weight="normal" textLength="17.97" lengthAdjust="spacingAndGlyphs" >110,</text>
<rect x="384" y="426.5" width="616" height="14.5" fill="#777777"/>
<text x="386.6" y="437.2" font-size="10.2" fill="#f0f0f0" text-anchor="start" font-weight="normal" textLength="35.58" lengthAdjust="spacingAndGlyphs" >Target Y</text>
<text x="465.3" y="437.2" font-size="10.2" fill="#f0f0f0" text-anchor="start" font-weight="normal" textLength="29.36" lengthAdjust="spacingAndGlyphs" >0,3814</text>
<text x="520.4" y="437.2" font-size="10.2" fill="#f0f0f0" text-anchor="start" font-weight="normal" textLength="29.36" lengthAdjust="spacingAndGlyphs" >1,8991</text>
<text x="576.3" y="437.2" font-size="10.2" fill="#f0f0f0" text-anchor="start" font-weight="normal" textLength="29.36" lengthAdjust="spacingAndGlyphs" >4,9270</text>
<text x="626.5" y="437.2" font-size="10.2" fill="#f0f0f0" text-anchor="start" font-weight="normal" textLength="29.36" lengthAdjust="spacingAndGlyphs" >9,7300</text>
<text x="676" y="437.2" font-size="10.2" fill="#f0f0f0" text-anchor="start" font-weight="normal" textLength="34.7" lengthAdjust="spacingAndGlyphs" >16,5234</text>
<text x="725.6" y="437.2" font-size="10.2" fill="#f0f0f0" text-anchor="start" font-weight="normal" textLength="34.7" lengthAdjust="spacingAndGlyphs" >25,4916</text>
<text x="775.2" y="437.2" font-size="10.2" fill="#f0f0f0" text-anchor="start" font-weight="normal" textLength="34.7" lengthAdjust="spacingAndGlyphs" >36,7983</text>
<text x="825.5" y="437.2" font-size="10.2" fill="#f0f0f0" text-anchor="start" font-weight="normal" textLength="34.7" lengthAdjust="spacingAndGlyphs" >50,5913</text>
<text x="875.4" y="437.2" font-size="10.2" fill="#f0f0f0" text-anchor="start" font-weight="normal" textLength="34.7" lengthAdjust="spacingAndGlyphs" >67,0063</text>
<text x="925.6" y="437.2" font-size="10.2" fill="#f0f0f0" text-anchor="start" font-weight="normal" textLength="34.7" lengthAdjust="spacingAndGlyphs" >86,1693</text>
<text x="975.2" y="437.2" font-size="10.2" fill="#f0f0f0" text-anchor="start" font-weight="normal" textLength="18.68" lengthAdjust="spacingAndGlyphs" >108,</text>
<rect x="384" y="441.0" width="616" height="14.5" fill="#3b3b3b"/>
<text x="386.6" y="451.7" font-size="10.2" fill="#f0f0f0" text-anchor="start" font-weight="normal" textLength="71.5" lengthAdjust="spacingAndGlyphs" >Gamma Log/Log</text>
<text x="465.3" y="451.7" font-size="10.2" fill="#f0f0f0" text-anchor="start" font-weight="normal" textLength="29.36" lengthAdjust="spacingAndGlyphs" >0,7795</text>
<text x="520.4" y="451.7" font-size="10.2" fill="#f0f0f0" text-anchor="start" font-weight="normal" textLength="29.36" lengthAdjust="spacingAndGlyphs" >2,0786</text>
<text x="576.3" y="451.7" font-size="10.2" fill="#f0f0f0" text-anchor="start" font-weight="normal" textLength="29.36" lengthAdjust="spacingAndGlyphs" >2,1777</text>
<text x="626.5" y="451.7" font-size="10.2" fill="#f0f0f0" text-anchor="start" font-weight="normal" textLength="29.36" lengthAdjust="spacingAndGlyphs" >2,2098</text>
<text x="676" y="451.7" font-size="10.2" fill="#f0f0f0" text-anchor="start" font-weight="normal" textLength="29.36" lengthAdjust="spacingAndGlyphs" >2,1984</text>
<text x="725.6" y="451.7" font-size="10.2" fill="#f0f0f0" text-anchor="start" font-weight="normal" textLength="29.36" lengthAdjust="spacingAndGlyphs" >2,1690</text>
<text x="775.2" y="451.7" font-size="10.2" fill="#f0f0f0" text-anchor="start" font-weight="normal" textLength="29.36" lengthAdjust="spacingAndGlyphs" >2,2242</text>
<text x="825.5" y="451.7" font-size="10.2" fill="#f0f0f0" text-anchor="start" font-weight="normal" textLength="29.36" lengthAdjust="spacingAndGlyphs" >2,2290</text>
<text x="875.4" y="451.7" font-size="10.2" fill="#f0f0f0" text-anchor="start" font-weight="normal" textLength="29.36" lengthAdjust="spacingAndGlyphs" >2,2285</text>
<text x="925.6" y="451.7" font-size="10.2" fill="#f0f0f0" text-anchor="start" font-weight="normal" textLength="29.36" lengthAdjust="spacingAndGlyphs" >2,2193</text>
<text x="975.2" y="451.7" font-size="10.2" fill="#f0f0f0" text-anchor="start" font-weight="normal" textLength="18.68" lengthAdjust="spacingAndGlyphs" >2,20</text>
<rect x="384" y="455.5" width="616" height="14.5" fill="#777777"/>
<text x="386.6" y="466.2" font-size="10.2" fill="#f0f0f0" text-anchor="start" font-weight="normal" textLength="19.73" lengthAdjust="spacingAndGlyphs" >CCT</text>
<text x="465.3" y="466.2" font-size="10.2" fill="#f0f0f0" text-anchor="start" font-weight="normal" textLength="50.71" lengthAdjust="spacingAndGlyphs" >45773,0000</text>
<text x="520.4" y="466.2" font-size="10.2" fill="#f0f0f0" text-anchor="start" font-weight="normal" textLength="50.71" lengthAdjust="spacingAndGlyphs" >10052,0000</text>
<text x="576.3" y="466.2" font-size="10.2" fill="#f0f0f0" text-anchor="start" font-weight="normal" textLength="45.38" lengthAdjust="spacingAndGlyphs" >7841,0000</text>
<text x="626.5" y="466.2" font-size="10.2" fill="#f0f0f0" text-anchor="start" font-weight="normal" textLength="45.38" lengthAdjust="spacingAndGlyphs" >7478,0000</text>
<text x="676" y="466.2" font-size="10.2" fill="#f0f0f0" text-anchor="start" font-weight="normal" textLength="45.38" lengthAdjust="spacingAndGlyphs" >7333,0000</text>
<text x="725.6" y="466.2" font-size="10.2" fill="#f0f0f0" text-anchor="start" font-weight="normal" textLength="45.38" lengthAdjust="spacingAndGlyphs" >7253,0000</text>
<text x="775.2" y="466.2" font-size="10.2" fill="#f0f0f0" text-anchor="start" font-weight="normal" textLength="45.38" lengthAdjust="spacingAndGlyphs" >7425,0000</text>
<text x="825.5" y="466.2" font-size="10.2" fill="#f0f0f0" text-anchor="start" font-weight="normal" textLength="45.38" lengthAdjust="spacingAndGlyphs" >7393,0000</text>
<text x="875.4" y="466.2" font-size="10.2" fill="#f0f0f0" text-anchor="start" font-weight="normal" textLength="45.38" lengthAdjust="spacingAndGlyphs" >7420,0000</text>
<text x="925.6" y="466.2" font-size="10.2" fill="#f0f0f0" text-anchor="start" font-weight="normal" textLength="45.38" lengthAdjust="spacingAndGlyphs" >7341,0000</text>
<text x="975.2" y="466.2" font-size="10.2" fill="#f0f0f0" text-anchor="start" font-weight="normal" textLength="21.35" lengthAdjust="spacingAndGlyphs" >7360</text>
<rect x="384" y="470.0" width="616" height="14.5" fill="#3b3b3b"/>
<text x="386.6" y="480.7" font-size="10.2" fill="#f0f0f0" text-anchor="start" font-weight="normal" textLength="36.84" lengthAdjust="spacingAndGlyphs" >ΔE 2000</text>
<text x="465.3" y="480.7" font-size="10.2" fill="#f0f0f0" text-anchor="start" font-weight="normal" textLength="29.36" lengthAdjust="spacingAndGlyphs" >1,4278</text>
<text x="520.4" y="480.7" font-size="10.2" fill="#f0f0f0" text-anchor="start" font-weight="normal" textLength="29.36" lengthAdjust="spacingAndGlyphs" >1,5697</text>
<text x="576.3" y="480.7" font-size="10.2" fill="#f0f0f0" text-anchor="start" font-weight="normal" textLength="29.36" lengthAdjust="spacingAndGlyphs" >2,3717</text>
<text x="626.5" y="480.7" font-size="10.2" fill="#f0f0f0" text-anchor="start" font-weight="normal" textLength="29.36" lengthAdjust="spacingAndGlyphs" >2,4006</text>
<text x="676" y="480.7" font-size="10.2" fill="#f0f0f0" text-anchor="start" font-weight="normal" textLength="29.36" lengthAdjust="spacingAndGlyphs" >2,2033</text>
<text x="725.6" y="480.7" font-size="10.2" fill="#f0f0f0" text-anchor="start" font-weight="normal" textLength="29.36" lengthAdjust="spacingAndGlyphs" >2,1337</text>
<text x="775.2" y="480.7" font-size="10.2" fill="#f0f0f0" text-anchor="start" font-weight="normal" textLength="29.36" lengthAdjust="spacingAndGlyphs" >2,8648</text>
<text x="825.5" y="480.7" font-size="10.2" fill="#f0f0f0" text-anchor="start" font-weight="normal" textLength="29.36" lengthAdjust="spacingAndGlyphs" >3,0200</text>
<text x="875.4" y="480.7" font-size="10.2" fill="#f0f0f0" text-anchor="start" font-weight="normal" textLength="29.36" lengthAdjust="spacingAndGlyphs" >3,3766</text>
<text x="925.6" y="480.7" font-size="10.2" fill="#f0f0f0" text-anchor="start" font-weight="normal" textLength="29.36" lengthAdjust="spacingAndGlyphs" >3,3820</text>
<text x="975.2" y="480.7" font-size="10.2" fill="#f0f0f0" text-anchor="start" font-weight="normal" textLength="18.68" lengthAdjust="spacingAndGlyphs" >3,73</text>
</g>
<rect x="994" y="367" width="6" height="130" fill="#262626"/>
<rect x="384" y="486.2" width="610" height="8.3" fill="#424242"/>
<rect x="394" y="487" width="316" height="6.8" rx="3.4" fill="#505050"/>
<rect x="385" y="486.5" width="9" height="8" rx="1" fill="#707070"/>
<path d="M388 490.5 L391 488 L391 493 Z" fill="#222"/>
<rect x="985.5" y="486.5" width="8.5" height="8" rx="1" fill="#6a6a6a"/>
<path d="M991.5 490.5 L988.3 488 L988.3 493 Z" fill="#2a2a2a"/>
<path d="M1.0 528 V499.5 Q1.0 497.4 3.0 497.4 H37.0 Q39.0 497.4 39.0 499.5 V528 Z" fill="url(#swbtn)"/>
<rect x="3.3" y="500" width="33.4" height="18.6" rx="2" fill="rgb(0,0,0)" stroke="#5a5a5a" stroke-width="0.6"/>
<text x="20.0" y="526.4" font-size="6.6" fill="#2e2e2e" text-anchor="middle" font-weight="normal" stroke="#2e2e2e" stroke-width="0.15">0</text>
<path d="M40.5 528 V499.5 Q40.5 497.4 42.5 497.4 H76.5 Q78.5 497.4 78.5 499.5 V528 Z" fill="url(#swbtn)"/>
<rect x="42.8" y="500" width="33.4" height="18.6" rx="2" fill="rgb(13,13,13)" stroke="#5a5a5a" stroke-width="0.6"/>
<text x="59.55" y="526.4" font-size="6.6" fill="#2e2e2e" text-anchor="middle" font-weight="normal" stroke="#2e2e2e" stroke-width="0.15">5</text>
<path d="M80.1 528 V499.5 Q80.1 497.4 82.1 497.4 H116.1 Q118.1 497.4 118.1 499.5 V528 Z" fill="url(#swbtn)"/>
<rect x="82.4" y="500" width="33.4" height="18.6" rx="2" fill="rgb(26,26,26)" stroke="#5a5a5a" stroke-width="0.6"/>
<text x="99.1" y="526.4" font-size="6.6" fill="#2e2e2e" text-anchor="middle" font-weight="normal" stroke="#2e2e2e" stroke-width="0.15">10</text>
<path d="M119.6 528 V499.5 Q119.6 497.4 121.6 497.4 H155.6 Q157.6 497.4 157.6 499.5 V528 Z" fill="url(#swbtn)"/>
<rect x="121.9" y="500" width="33.4" height="18.6" rx="2" fill="rgb(38,38,38)" stroke="#5a5a5a" stroke-width="0.6"/>
<text x="138.64999999999998" y="526.4" font-size="6.6" fill="#2e2e2e" text-anchor="middle" font-weight="normal" stroke="#2e2e2e" stroke-width="0.15">15</text>
<path d="M159.2 528 V499.5 Q159.2 497.4 161.2 497.4 H195.2 Q197.2 497.4 197.2 499.5 V528 Z" fill="url(#swbtn)"/>
<rect x="161.5" y="500" width="33.4" height="18.6" rx="2" fill="rgb(51,51,51)" stroke="#5a5a5a" stroke-width="0.6"/>
<text x="178.2" y="526.4" font-size="6.6" fill="#2e2e2e" text-anchor="middle" font-weight="normal" stroke="#2e2e2e" stroke-width="0.15">20</text>
<path d="M198.8 528 V499.5 Q198.8 497.4 200.8 497.4 H234.8 Q236.8 497.4 236.8 499.5 V528 Z" fill="url(#swbtn)"/>
<rect x="201.1" y="500" width="33.4" height="18.6" rx="2" fill="rgb(64,64,64)" stroke="#5a5a5a" stroke-width="0.6"/>
<text x="217.75" y="526.4" font-size="6.6" fill="#2e2e2e" text-anchor="middle" font-weight="normal" stroke="#2e2e2e" stroke-width="0.15">25</text>
<path d="M238.3 528 V499.5 Q238.3 497.4 240.3 497.4 H274.3 Q276.3 497.4 276.3 499.5 V528 Z" fill="url(#swbtn)"/>
<rect x="240.6" y="500" width="33.4" height="18.6" rx="2" fill="rgb(76,76,76)" stroke="#5a5a5a" stroke-width="0.6"/>
<text x="257.29999999999995" y="526.4" font-size="6.6" fill="#2e2e2e" text-anchor="middle" font-weight="normal" stroke="#2e2e2e" stroke-width="0.15">30</text>
<path d="M277.8 528 V499.5 Q277.8 497.4 279.8 497.4 H313.8 Q315.8 497.4 315.8 499.5 V528 Z" fill="url(#swbtn)"/>
<rect x="280.1" y="500" width="33.4" height="18.6" rx="2" fill="rgb(89,89,89)" stroke="#5a5a5a" stroke-width="0.6"/>
<text x="296.84999999999997" y="526.4" font-size="6.6" fill="#2e2e2e" text-anchor="middle" font-weight="normal" stroke="#2e2e2e" stroke-width="0.15">35</text>
<path d="M317.4 528 V499.5 Q317.4 497.4 319.4 497.4 H353.4 Q355.4 497.4 355.4 499.5 V528 Z" fill="url(#swbtn)"/>
<rect x="319.7" y="500" width="33.4" height="18.6" rx="2" fill="rgb(102,102,102)" stroke="#5a5a5a" stroke-width="0.6"/>
<text x="336.4" y="526.4" font-size="6.6" fill="#2e2e2e" text-anchor="middle" font-weight="normal" stroke="#2e2e2e" stroke-width="0.15">40</text>
<path d="M356.9 528 V499.5 Q356.9 497.4 358.9 497.4 H392.9 Q394.9 497.4 394.9 499.5 V528 Z" fill="url(#swbtn)"/>
<rect x="359.2" y="500" width="33.4" height="18.6" rx="2" fill="rgb(115,115,115)" stroke="#5a5a5a" stroke-width="0.6"/>
<text x="375.95" y="526.4" font-size="6.6" fill="#2e2e2e" text-anchor="middle" font-weight="normal" stroke="#2e2e2e" stroke-width="0.15">45</text>
<path d="M396.5 528 V499.5 Q396.5 497.4 398.5 497.4 H432.5 Q434.5 497.4 434.5 499.5 V528 Z" fill="url(#swbtn)"/>
<rect x="398.8" y="500" width="33.4" height="18.6" rx="2" fill="rgb(127,127,127)" stroke="#5a5a5a" stroke-width="0.6"/>
<text x="415.5" y="526.4" font-size="6.6" fill="#2e2e2e" text-anchor="middle" font-weight="normal" stroke="#2e2e2e" stroke-width="0.15">50</text>
<path d="M436.0 528 V499.5 Q436.0 497.4 438.0 497.4 H472.0 Q474.0 497.4 474.0 499.5 V528 Z" fill="url(#swbtn)"/>
<rect x="438.3" y="500" width="33.4" height="18.6" rx="2" fill="rgb(140,140,140)" stroke="#5a5a5a" stroke-width="0.6"/>
<text x="455.04999999999995" y="526.4" font-size="6.6" fill="#2e2e2e" text-anchor="middle" font-weight="normal" stroke="#2e2e2e" stroke-width="0.15">55</text>
<path d="M475.6 528 V499.5 Q475.6 497.4 477.6 497.4 H511.6 Q513.6 497.4 513.6 499.5 V528 Z" fill="url(#swbtn)"/>
<rect x="477.9" y="500" width="33.4" height="18.6" rx="2" fill="rgb(153,153,153)" stroke="#5a5a5a" stroke-width="0.6"/>
<text x="494.59999999999997" y="526.4" font-size="6.6" fill="#2e2e2e" text-anchor="middle" font-weight="normal" stroke="#2e2e2e" stroke-width="0.15">60</text>
<path d="M515.1 528 V499.5 Q515.1 497.4 517.1 497.4 H551.1 Q553.1 497.4 553.1 499.5 V528 Z" fill="url(#swbtn)"/>
<rect x="517.4" y="500" width="33.4" height="18.6" rx="2" fill="rgb(166,166,166)" stroke="#5a5a5a" stroke-width="0.6"/>
<text x="534.15" y="526.4" font-size="6.6" fill="#2e2e2e" text-anchor="middle" font-weight="normal" stroke="#2e2e2e" stroke-width="0.15">65</text>
<path d="M554.7 528 V499.5 Q554.7 497.4 556.7 497.4 H590.7 Q592.7 497.4 592.7 499.5 V528 Z" fill="url(#swbtn)"/>
<rect x="557.0" y="500" width="33.4" height="18.6" rx="2" fill="rgb(178,178,178)" stroke="#5a5a5a" stroke-width="0.6"/>
<text x="573.6999999999999" y="526.4" font-size="6.6" fill="#2e2e2e" text-anchor="middle" font-weight="normal" stroke="#2e2e2e" stroke-width="0.15">70</text>
<path d="M594.2 528 V499.5 Q594.2 497.4 596.2 497.4 H630.2 Q632.2 497.4 632.2 499.5 V528 Z" fill="url(#swbtn)"/>
<rect x="596.5" y="500" width="33.4" height="18.6" rx="2" fill="rgb(191,191,191)" stroke="#5a5a5a" stroke-width="0.6"/>
<text x="613.25" y="526.4" font-size="6.6" fill="#2e2e2e" text-anchor="middle" font-weight="normal" stroke="#2e2e2e" stroke-width="0.15">75</text>
<path d="M633.8 528 V499.5 Q633.8 497.4 635.8 497.4 H669.8 Q671.8 497.4 671.8 499.5 V528 Z" fill="url(#swbtn)"/>
<rect x="636.1" y="500" width="33.4" height="18.6" rx="2" fill="rgb(204,204,204)" stroke="#5a5a5a" stroke-width="0.6"/>
<text x="652.8" y="526.4" font-size="6.6" fill="#2e2e2e" text-anchor="middle" font-weight="normal" stroke="#2e2e2e" stroke-width="0.15">80</text>
<path d="M673.3 528 V499.5 Q673.3 497.4 675.3 497.4 H709.3 Q711.3 497.4 711.3 499.5 V528 Z" fill="url(#swbtn)"/>
<rect x="675.6" y="500" width="33.4" height="18.6" rx="2" fill="rgb(217,217,217)" stroke="#5a5a5a" stroke-width="0.6"/>
<text x="692.3499999999999" y="526.4" font-size="6.6" fill="#2e2e2e" text-anchor="middle" font-weight="normal" stroke="#2e2e2e" stroke-width="0.15">85</text>
<path d="M712.9 528 V499.5 Q712.9 497.4 714.9 497.4 H748.9 Q750.9 497.4 750.9 499.5 V528 Z" fill="url(#swbtn)"/>
<rect x="715.2" y="500" width="33.4" height="18.6" rx="2" fill="rgb(229,229,229)" stroke="#5a5a5a" stroke-width="0.6"/>
<text x="731.9" y="526.4" font-size="6.6" fill="#2e2e2e" text-anchor="middle" font-weight="normal" stroke="#2e2e2e" stroke-width="0.15">90</text>
<path d="M752.4 528 V499.5 Q752.4 497.4 754.4 497.4 H788.4 Q790.4 497.4 790.4 499.5 V528 Z" fill="url(#swbtn)"/>
<rect x="754.7" y="500" width="33.4" height="18.6" rx="2" fill="rgb(242,242,242)" stroke="#5a5a5a" stroke-width="0.6"/>
<text x="771.4499999999999" y="526.4" font-size="6.6" fill="#2e2e2e" text-anchor="middle" font-weight="normal" stroke="#2e2e2e" stroke-width="0.15">95</text>
<rect x="792.0" y="497" width="38" height="31" fill="#2a2a2a"/>
<rect x="793.0" y="498" width="36" height="22" rx="2" fill="#161616"/>
<rect x="795.0" y="500" width="32" height="18.6" rx="2" fill="#fff"/>
<text x="811.0" y="525.8" font-size="7" fill="#fff" text-anchor="middle" font-weight="bold" >100</text>
<rect x="831" y="497" width="26" height="31" fill="#5a5a5a"/>
<rect x="831.8" y="497.2" width="24.6" height="9" rx="1.5" fill="url(#swbtn)"/>
<path d="M840.6 502.5 A3.4 3.4 0 0 1 847.4 502.5" fill="none" stroke="#3a3a3a" stroke-width="1"/>
<path d="M842.2 503 L844 500.8 L845.8 503 Z" fill="#1a1a1a"/>
<rect x="831.8" y="507.6" width="24.6" height="20.4" fill="#7e7e7e"/>
<rect x="836.6" y="510.2" width="15" height="15.2" rx="1.8" fill="#a2a2a2" stroke="#2a2a2a" stroke-width="1.1"/>
<rect x="841.2" y="514.6" width="6.4" height="6.4" fill="#050505" stroke="#555" stroke-width="0.5"/>
<rect x="857" y="497" width="25" height="15" fill="url(#ctlbtn)" stroke="#555" stroke-width="0.6"/>
<circle cx="869.5" cy="505" r="5.4" fill="#939393" stroke="#a4a4a4" stroke-width="0.5"/>
<rect x="882" y="497" width="23" height="15" fill="url(#ctlbtn)" stroke="#555" stroke-width="0.6"/>
<circle cx="893.5" cy="505" r="5.4" fill="#939393" stroke="#a4a4a4" stroke-width="0.5"/>
<rect x="905" y="497" width="23" height="15" fill="url(#ctlbtn)" stroke="#555" stroke-width="0.6"/>
<circle cx="916.5" cy="505" r="5.4" fill="#939393" stroke="#a4a4a4" stroke-width="0.5"/>
<rect x="928" y="497" width="23" height="15" fill="url(#ctlbtn)" stroke="#555" stroke-width="0.6"/>
<circle cx="939.5" cy="505" r="5.4" fill="#939393" stroke="#a4a4a4" stroke-width="0.5"/>
<rect x="951" y="497" width="24" height="15" fill="url(#ctlbtn)" stroke="#555" stroke-width="0.6"/>
<circle cx="963.0" cy="505" r="5.4" fill="#939393" stroke="#a4a4a4" stroke-width="0.5"/>
<rect x="867" y="502.8" width="4.4" height="4.4" fill="#151515"/>
<path d="M891.2 501.6 L896.4 505 L891.2 508.4 Z" fill="#151515"/>
<path d="M913.3 502.2 Q913.3 501 914.5 501 H919.1 Q920.3 501 920.3 502.2 V508.8 H913.3 Z M914.6 504.6 H919 M914.6 501.2 V503.8 M919 501.2 V503.8" fill="none" stroke="#1a1a1a" stroke-width="1.1"/>
<circle cx="937.8" cy="505" r="1.7" fill="none" stroke="#1a1a1a" stroke-width="1.1"/>
<circle cx="941.2" cy="505" r="1.7" fill="none" stroke="#1a1a1a" stroke-width="1.1"/>
<path d="M960.5 502.4 A2.8 2.8 0 0 0 960.5 507.6 M961.5 507.6 A2.8 2.8 0 0 0 961.5 502.4" fill="none" stroke="#1a1a1a" stroke-width="1.2"/>
<path d="M962.3 501 L962.3 503.8 L959.8 502.4 Z M959.7 509 L959.7 506.2 L962.2 507.6 Z" fill="#1a1a1a"/>
<rect x="975" y="497" width="25" height="15" fill="#3a3a3a"/>
<circle cx="989" cy="505" r="5.5" fill="#2e2e2e"/>
<rect x="857" y="513" width="71.5" height="15" fill="url(#ctlbtn)" stroke="#555" stroke-width="0.6"/>
<rect x="928.5" y="513" width="71.5" height="15" fill="url(#ctlbtn)" stroke="#555" stroke-width="0.6"/>
<circle cx="873" cy="520.5" r="4.8" fill="#8a8a8a" stroke="#999" stroke-width="0.5"/>
<path d="M872.2 518.3 L870.4 520.5 L872.2 522.7 M875 518.3 L873.2 520.5 L875 522.7" fill="none" stroke="#222" stroke-width="0.9"/>
<circle cx="987" cy="520.5" r="4.8" fill="#8a8a8a" stroke="#999" stroke-width="0.5"/>
<path d="M985 518.3 L986.8 520.5 L985 522.7 M987.8 518.3 L989.6 520.5 L987.8 522.7" fill="none" stroke="#222" stroke-width="0.9"/>
<text x="887.5" y="525.3" font-size="12.4" fill="#1e1e1e" text-anchor="start" font-weight="normal" textLength="26" lengthAdjust="spacingAndGlyphs" stroke="#1e1e1e" stroke-width="0.4">Back</text>
<text x="942.4" y="525.3" font-size="12.4" fill="#1e1e1e" text-anchor="start" font-weight="normal" textLength="27" lengthAdjust="spacingAndGlyphs" stroke="#1e1e1e" stroke-width="0.4">Next</text>
</svg></body></html>
